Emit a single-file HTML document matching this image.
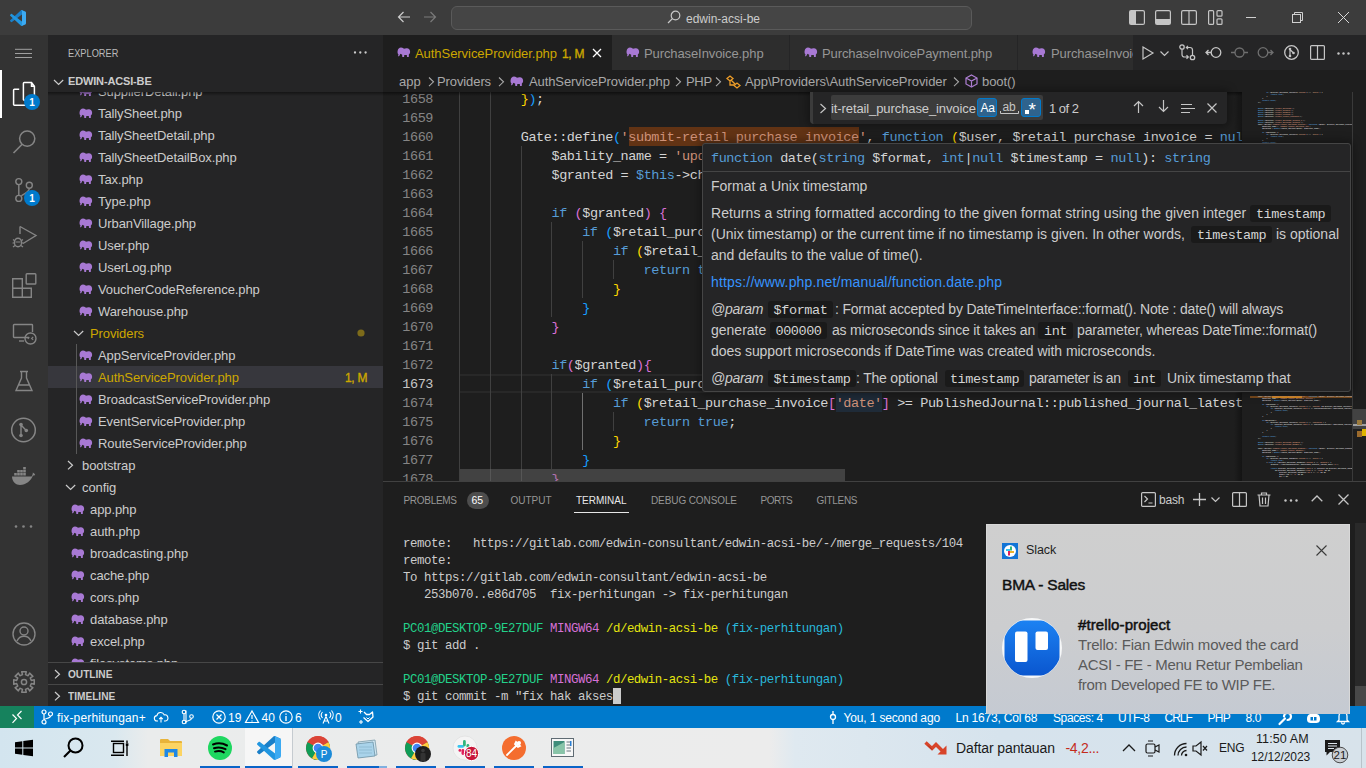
<!DOCTYPE html>
<html><head><meta charset="utf-8">
<style>
*{margin:0;padding:0;box-sizing:border-box}
html,body{width:1366px;height:768px;overflow:hidden;background:#1e1e1e;font-family:"Liberation Sans",sans-serif;position:relative}
.a{position:absolute}
.t{position:absolute;white-space:pre;line-height:1}
svg.i{position:absolute;overflow:visible}
.m{font-family:"Liberation Mono",monospace}
</style></head><body>
<div class="a" style="left:0px;top:0px;width:1366px;height:35px;background:#3c3c3c;"></div>
<div class="a" style="left:0px;top:35px;width:48px;height:671px;background:#333333;"></div>
<div class="a" style="left:48px;top:35px;width:335px;height:671px;background:#252526;"></div>
<div class="a" style="left:383px;top:35px;width:983px;height:35px;background:#252526;"></div>
<div class="a" style="left:383px;top:70px;width:983px;height:22px;background:#1e1e1e;"></div>
<div class="a" style="left:383px;top:92px;width:983px;height:390px;background:#1e1e1e;"></div>
<div class="a" style="left:383px;top:482px;width:983px;height:224px;background:#1e1e1e;"></div>
<div class="a" style="left:383px;top:481px;width:983px;height:1px;background:#414141;"></div>
<div class="a" style="left:0px;top:706px;width:1366px;height:22px;background:#007acc;"></div>
<div class="a" style="left:0px;top:728px;width:1366px;height:40px;background:linear-gradient(90deg,#d3e5ef 0px,#dae8ef 115px,#eaecec 148px,#ececec 770px,#dfe9f0 795px,#d6e3ed 1000px,#d8e3eb 1366px);"></div>
<svg class="i" style="left:10px;top:10px;" width="16" height="16" viewBox="0 0 100 100"><path d="M96.46 10.8L75.86 0.87C73.48-0.28 70.63 0.2 68.76 2.07L1.3 63.57C-0.51 65.22-0.51 68.08 1.31 69.73L6.82 74.74C8.3 76.09 10.53 76.19 12.13 74.98L93.4 13.33C96.12 11.26 100 13.2 100 16.62V16.38C100 13.98 98.63 11.8 96.46 10.8Z" fill="#1a7fc8"/><path d="M96.46 89.2L75.86 99.13C73.48 100.28 70.63 99.8 68.76 97.93L1.3 36.43C-0.51 34.78-0.51 31.92 1.31 30.27L6.82 25.26C8.3 23.91 10.53 23.81 12.13 25.02L93.4 86.67C96.12 88.74 100 86.8 100 83.38V83.62C100 86.02 98.63 88.2 96.46 89.2Z" fill="#2196e0"/><path d="M75.86 99.13C73.48 100.27 70.63 99.79 68.76 97.92C71.07 100.23 75 98.6 75 95.34V4.66C75 1.4 71.07-0.23 68.76 2.08C70.63 0.21 73.48-0.27 75.86 0.87L96.46 10.79C98.63 11.83 100 14.01 100 16.42V83.58C100 85.99 98.63 88.17 96.46 89.21Z" fill="#3caaf2"/></svg>
<svg class="i" style="left:397px;top:11px;" width="14" height="12" viewBox="0 0 14 12"><path d="M13 6H1.5M6.5 1L1.5 6l5 5" stroke="#cccccc" stroke-width="1.2" fill="none"/></svg>
<svg class="i" style="left:423px;top:11px;" width="14" height="12" viewBox="0 0 14 12"><path d="M1 6h11.5M7.5 1l5 5-5 5" stroke="#7a7a7a" stroke-width="1.2" fill="none"/></svg>
<div class="a" style="left:451px;top:6px;width:521px;height:24px;background:#454545;border:1px solid #5a5a5a;border-radius:6px"></div>
<svg class="i" style="left:667px;top:10px;" width="14" height="14" viewBox="0 0 14 14"><circle cx="8.5" cy="5.5" r="4.3" stroke="#c8c8c8" stroke-width="1.2" fill="none"/><path d="M5.4 8.6L1 13" stroke="#c8c8c8" stroke-width="1.3"/></svg>
<div class="t" style="left:686px;top:12.84px;font-size:12px;color:#cccccc;">edwin-acsi-be</div>
<svg class="i" style="left:1129px;top:10px;" width="16" height="15" viewBox="0 0 16 15"><rect x="0.6" y="0.6" width="14.8" height="13.8" rx="1.5" stroke="#c5c5c5" stroke-width="1.2" fill="none"/><rect x="1" y="1" width="6" height="13" fill="#c5c5c5"/></svg>
<svg class="i" style="left:1155px;top:10px;" width="16" height="15" viewBox="0 0 16 15"><rect x="0.6" y="0.6" width="14.8" height="13.8" rx="1.5" stroke="#c5c5c5" stroke-width="1.2" fill="none"/><rect x="1" y="9" width="14" height="5" fill="#c5c5c5"/></svg>
<svg class="i" style="left:1181px;top:10px;" width="16" height="15" viewBox="0 0 16 15"><rect x="0.6" y="0.6" width="14.8" height="13.8" rx="1.5" stroke="#c5c5c5" stroke-width="1.2" fill="none"/><path d="M8 1v13" stroke="#c5c5c5" stroke-width="1.2"/></svg>
<svg class="i" style="left:1208px;top:10px;" width="15" height="15" viewBox="0 0 15 15"><rect x="0.6" y="0.6" width="5" height="13.8" rx="1" stroke="#c5c5c5" stroke-width="1.2" fill="none"/><rect x="9" y="0.6" width="5" height="5.6" rx="1" stroke="#c5c5c5" stroke-width="1.2" fill="none"/><rect x="9" y="8.8" width="5" height="5.6" rx="1" stroke="#c5c5c5" stroke-width="1.2" fill="none"/></svg>
<div class="a" style="left:1246px;top:17px;width:10px;height:1px;background:#d0d0d0;"></div>
<svg class="i" style="left:1292px;top:12px;" width="11" height="11" viewBox="0 0 11 11"><rect x="0.5" y="2.5" width="8" height="8" stroke="#d0d0d0" fill="none"/><path d="M2.5 2.5V0.5h8v8h-2" stroke="#d0d0d0" fill="none"/></svg>
<svg class="i" style="left:1338px;top:12px;" width="11" height="11" viewBox="0 0 11 11"><path d="M0 0L11 11M11 0L0 11" stroke="#d8d8d8" stroke-width="1"/></svg>
<svg class="i" style="left:15px;top:48px;" width="18" height="11" viewBox="0 0 18 11"><path d="M0 1.3h17M0 5.5h17M0 9.5h17" stroke="#a0a0a0" stroke-width="1" fill="none"/></svg>
<div class="a" style="left:0px;top:70px;width:2px;height:48px;background:#ffffff;"></div>
<svg class="i" style="left:12px;top:81px;" width="24" height="26" viewBox="0 0 24 26"><path d="M19.5 1.6H12.2a0.8 0.8 0 0 0-0.8 0.8V18.4a0.8 0.8 0 0 0 0.8 0.8H21.6a0.8 0.8 0 0 0 0.8-0.8V5.3z M19.5 1.6V5.3h2.9" stroke="#ffffff" stroke-width="1.5" fill="none"/><path d="M7.2 8.3H2.4a0.8 0.8 0 0 0-0.8 0.8V23.4a0.8 0.8 0 0 0 0.8 0.8H15.6a0.8 0.8 0 0 0 0.8-0.8V19.5" stroke="#ffffff" stroke-width="1.5" fill="none"/></svg>
<svg class="i" style="left:24px;top:94px;" width="16" height="16" viewBox="0 0 16 16"><circle cx="8" cy="8" r="8" fill="#007acc"/><text x="8" y="12" font-size="10" font-family="Liberation Sans" font-weight="bold" fill="#fff" text-anchor="middle">1</text></svg>
<svg class="i" style="left:12px;top:129px;" width="26" height="26" viewBox="0 0 26 26"><circle cx="15.2" cy="9.6" r="7.6" stroke="#858585" stroke-width="1.5" fill="none"/><path d="M10.2 15.2L1.5 24" stroke="#858585" stroke-width="1.6" fill="none"/></svg>
<svg class="i" style="left:12px;top:176px;" width="24" height="26" viewBox="0 0 24 26"><circle cx="6.8" cy="5.6" r="3" stroke="#858585" stroke-width="1.4" fill="none"/><circle cx="6.8" cy="22.4" r="3" stroke="#858585" stroke-width="1.4" fill="none"/><circle cx="17.3" cy="9.3" r="3" stroke="#858585" stroke-width="1.4" fill="none"/><path d="M6.8 8.6V19.4M17.3 12.3c0 4-4 4.5-8 7.5" stroke="#858585" stroke-width="1.4" fill="none"/></svg>
<svg class="i" style="left:24px;top:190px;" width="16" height="16" viewBox="0 0 16 16"><circle cx="8" cy="8" r="8" fill="#007acc"/><text x="8" y="12" font-size="10" font-family="Liberation Sans" font-weight="bold" fill="#fff" text-anchor="middle">1</text></svg>
<svg class="i" style="left:12px;top:225px;" width="26" height="24" viewBox="0 0 26 24"><path d="M8 1.5L24 10.5L11 18.5" stroke="#858585" stroke-width="1.4" fill="none"/><path d="M8 1.5V9" stroke="#858585" stroke-width="1.4" fill="none"/><ellipse cx="6" cy="17.5" rx="3.6" ry="4.2" stroke="#858585" stroke-width="1.4" fill="none"/><path d="M1 14.5l2 1.5M11 14.5l-2 1.5M0.5 18h2M9.5 18h2M1 22l2-1.5M11 22l-2-1.5M3.5 17h5" stroke="#858585" stroke-width="1.2" fill="none"/></svg>
<svg class="i" style="left:12px;top:273px;" width="25" height="25" viewBox="0 0 25 25"><path d="M0.7 5.7H10.3V15.3H0.7Z M0.7 15.3H10.3V24.3H0.7Z M10.3 15.3H19.3V24.3H10.3Z" stroke="#858585" stroke-width="1.4" fill="none"/><rect x="14.2" y="0.7" width="9.6" height="10.3" rx="0.8" stroke="#858585" stroke-width="1.4" fill="none"/></svg>
<svg class="i" style="left:12px;top:323px;" width="26" height="24" viewBox="0 0 26 24"><path d="M17 14.5H2.2a0.7 0.7 0 0 1-0.7-0.7V2.2a0.7 0.7 0 0 1 0.7-0.7H19.8a0.7 0.7 0 0 1 0.7 0.7V9" stroke="#858585" stroke-width="1.4" fill="none"/><path d="M7 18h5" stroke="#858585" stroke-width="1.4" fill="none"/><circle cx="18.5" cy="15.5" r="5.5" stroke="#858585" stroke-width="1.4" fill="none"/><path d="M15.8 15.8l1.6-1.4M21.2 14l-1.6 1.4 1.6 1.4" stroke="#858585" stroke-width="1.1" fill="none"/></svg>
<svg class="i" style="left:14px;top:370px;" width="20" height="24" viewBox="0 0 20 24"><path d="M6 1.5h8M7.5 1.5V8L2 20.5h16L12.5 8V1.5M4 15h12" stroke="#858585" stroke-width="1.4" fill="none"/></svg>
<svg class="i" style="left:11px;top:418px;" width="26" height="26" viewBox="0 0 26 26"><circle cx="12.5" cy="12" r="11.8" stroke="#858585" stroke-width="1.5" fill="none"/><circle cx="10" cy="6.6" r="1.8" fill="#858585"/><circle cx="10" cy="17.5" r="1.8" fill="#858585"/><circle cx="15.3" cy="12.5" r="1.8" fill="#858585"/><path d="M10 6.6V17.5M10 7l5.3 5.5" stroke="#858585" stroke-width="1.4" fill="none"/></svg>
<svg class="i" style="left:11px;top:469px;" width="25" height="17" viewBox="0 0 25 17"><path d="M1 7.5h19.5c1-1.5 1.5-3 1.3-4 1.2 0.5 2 1.5 2.4 2.5-0.8 0.4-1.6 0.6-2.3 0.6C20 12 15 16 9 16c-4 0-8-3.5-8-8.5z" fill="#858585"/><path d="M3.2 4h2.6v2.6H3.2zM6.2 4h2.6v2.6H6.2zM9.2 4h2.6v2.6H9.2zM12.2 4h2.6v2.6h-2.6zM6.2 1h2.6v2.6H6.2zM9.2 1h2.6v2.6H9.2zM12.2 1h2.6v2.6h-2.6zM12.2 -2h2.6v2.6h-2.6z" fill="#858585"/></svg>
<svg class="i" style="left:14px;top:525px;" width="20" height="3" viewBox="0 0 20 3"><circle cx="2" cy="1.5" r="1.3" fill="#858585"/><circle cx="9.5" cy="1.5" r="1.3" fill="#858585"/><circle cx="17" cy="1.5" r="1.3" fill="#858585"/></svg>
<svg class="i" style="left:12px;top:622px;" width="24" height="24" viewBox="0 0 24 24"><circle cx="12" cy="12" r="11" stroke="#858585" stroke-width="1.4" fill="none"/><circle cx="12" cy="9" r="4" stroke="#858585" stroke-width="1.4" fill="none"/><path d="M5 19c1.5-3.5 4-4.8 7-4.8s5.5 1.3 7 4.8" stroke="#858585" stroke-width="1.4" fill="none"/></svg>
<svg class="i" style="left:12px;top:670px;" width="24" height="24" viewBox="0 0 24 24"><polygon points="19.35,10.51 22.25,9.71 22.25,14.29 19.35,13.49 18.25,16.14 20.87,17.63 17.63,20.87 16.14,18.25 13.49,19.35 14.29,22.25 9.71,22.25 10.51,19.35 7.86,18.25 6.37,20.87 3.13,17.63 5.75,16.14 4.65,13.49 1.75,14.29 1.75,9.71 4.65,10.51 5.75,7.86 3.13,6.37 6.37,3.13 7.86,5.75 10.51,4.65 9.71,1.75 14.29,1.75 13.49,4.65 16.14,5.75 17.63,3.13 20.87,6.37 18.25,7.86" stroke="#858585" stroke-width="1.5" fill="none" stroke-linejoin="round"/><circle cx="12" cy="12" r="2.6" stroke="#858585" stroke-width="1.5" fill="none"/></svg>
<div class="a" style="left:48px;top:92px;width:335px;height:570px;overflow:hidden">
<svg class="i" style="left:31px;top:-6px;" width="14" height="10" viewBox="0 0 14 10"><path d="M4 0.5C5.8 0.5 6.6 1.3 7 1.8 8 1.2 9.5 1 11 1.4 12.6 1.9 13.2 3.4 13.1 5 13 6.4 12.6 7 11.9 7.3L11.8 10H10L9.8 8.1H7.3L7.1 10H5.3L5.1 7.6C4.3 7.4 3.7 7.1 3.3 6.7L2.7 8.3C2.4 9.1 1.6 9.6 0.9 9.1L1.6 7.8C0.6 6.8 0.4 5.4 0.6 4 0.9 1.8 2.2 0.5 4 0.5Z" fill="#a879d4"/></svg>
<div class="t" style="left:50px;top:-7.20px;font-size:13px;color:#cccccc;letter-spacing:-0.1px">SupplierDetail.php</div>
<svg class="i" style="left:31px;top:16px;" width="14" height="10" viewBox="0 0 14 10"><path d="M4 0.5C5.8 0.5 6.6 1.3 7 1.8 8 1.2 9.5 1 11 1.4 12.6 1.9 13.2 3.4 13.1 5 13 6.4 12.6 7 11.9 7.3L11.8 10H10L9.8 8.1H7.3L7.1 10H5.3L5.1 7.6C4.3 7.4 3.7 7.1 3.3 6.7L2.7 8.3C2.4 9.1 1.6 9.6 0.9 9.1L1.6 7.8C0.6 6.8 0.4 5.4 0.6 4 0.9 1.8 2.2 0.5 4 0.5Z" fill="#a879d4"/></svg>
<div class="t" style="left:50px;top:14.80px;font-size:13px;color:#cccccc;letter-spacing:-0.1px">TallySheet.php</div>
<svg class="i" style="left:31px;top:38px;" width="14" height="10" viewBox="0 0 14 10"><path d="M4 0.5C5.8 0.5 6.6 1.3 7 1.8 8 1.2 9.5 1 11 1.4 12.6 1.9 13.2 3.4 13.1 5 13 6.4 12.6 7 11.9 7.3L11.8 10H10L9.8 8.1H7.3L7.1 10H5.3L5.1 7.6C4.3 7.4 3.7 7.1 3.3 6.7L2.7 8.3C2.4 9.1 1.6 9.6 0.9 9.1L1.6 7.8C0.6 6.8 0.4 5.4 0.6 4 0.9 1.8 2.2 0.5 4 0.5Z" fill="#a879d4"/></svg>
<div class="t" style="left:50px;top:36.80px;font-size:13px;color:#cccccc;letter-spacing:-0.1px">TallySheetDetail.php</div>
<svg class="i" style="left:31px;top:60px;" width="14" height="10" viewBox="0 0 14 10"><path d="M4 0.5C5.8 0.5 6.6 1.3 7 1.8 8 1.2 9.5 1 11 1.4 12.6 1.9 13.2 3.4 13.1 5 13 6.4 12.6 7 11.9 7.3L11.8 10H10L9.8 8.1H7.3L7.1 10H5.3L5.1 7.6C4.3 7.4 3.7 7.1 3.3 6.7L2.7 8.3C2.4 9.1 1.6 9.6 0.9 9.1L1.6 7.8C0.6 6.8 0.4 5.4 0.6 4 0.9 1.8 2.2 0.5 4 0.5Z" fill="#a879d4"/></svg>
<div class="t" style="left:50px;top:58.80px;font-size:13px;color:#cccccc;letter-spacing:-0.1px">TallySheetDetailBox.php</div>
<svg class="i" style="left:31px;top:82px;" width="14" height="10" viewBox="0 0 14 10"><path d="M4 0.5C5.8 0.5 6.6 1.3 7 1.8 8 1.2 9.5 1 11 1.4 12.6 1.9 13.2 3.4 13.1 5 13 6.4 12.6 7 11.9 7.3L11.8 10H10L9.8 8.1H7.3L7.1 10H5.3L5.1 7.6C4.3 7.4 3.7 7.1 3.3 6.7L2.7 8.3C2.4 9.1 1.6 9.6 0.9 9.1L1.6 7.8C0.6 6.8 0.4 5.4 0.6 4 0.9 1.8 2.2 0.5 4 0.5Z" fill="#a879d4"/></svg>
<div class="t" style="left:50px;top:80.80px;font-size:13px;color:#cccccc;letter-spacing:-0.1px">Tax.php</div>
<svg class="i" style="left:31px;top:104px;" width="14" height="10" viewBox="0 0 14 10"><path d="M4 0.5C5.8 0.5 6.6 1.3 7 1.8 8 1.2 9.5 1 11 1.4 12.6 1.9 13.2 3.4 13.1 5 13 6.4 12.6 7 11.9 7.3L11.8 10H10L9.8 8.1H7.3L7.1 10H5.3L5.1 7.6C4.3 7.4 3.7 7.1 3.3 6.7L2.7 8.3C2.4 9.1 1.6 9.6 0.9 9.1L1.6 7.8C0.6 6.8 0.4 5.4 0.6 4 0.9 1.8 2.2 0.5 4 0.5Z" fill="#a879d4"/></svg>
<div class="t" style="left:50px;top:102.80px;font-size:13px;color:#cccccc;letter-spacing:-0.1px">Type.php</div>
<svg class="i" style="left:31px;top:126px;" width="14" height="10" viewBox="0 0 14 10"><path d="M4 0.5C5.8 0.5 6.6 1.3 7 1.8 8 1.2 9.5 1 11 1.4 12.6 1.9 13.2 3.4 13.1 5 13 6.4 12.6 7 11.9 7.3L11.8 10H10L9.8 8.1H7.3L7.1 10H5.3L5.1 7.6C4.3 7.4 3.7 7.1 3.3 6.7L2.7 8.3C2.4 9.1 1.6 9.6 0.9 9.1L1.6 7.8C0.6 6.8 0.4 5.4 0.6 4 0.9 1.8 2.2 0.5 4 0.5Z" fill="#a879d4"/></svg>
<div class="t" style="left:50px;top:124.80px;font-size:13px;color:#cccccc;letter-spacing:-0.1px">UrbanVillage.php</div>
<svg class="i" style="left:31px;top:148px;" width="14" height="10" viewBox="0 0 14 10"><path d="M4 0.5C5.8 0.5 6.6 1.3 7 1.8 8 1.2 9.5 1 11 1.4 12.6 1.9 13.2 3.4 13.1 5 13 6.4 12.6 7 11.9 7.3L11.8 10H10L9.8 8.1H7.3L7.1 10H5.3L5.1 7.6C4.3 7.4 3.7 7.1 3.3 6.7L2.7 8.3C2.4 9.1 1.6 9.6 0.9 9.1L1.6 7.8C0.6 6.8 0.4 5.4 0.6 4 0.9 1.8 2.2 0.5 4 0.5Z" fill="#a879d4"/></svg>
<div class="t" style="left:50px;top:146.80px;font-size:13px;color:#cccccc;letter-spacing:-0.1px">User.php</div>
<svg class="i" style="left:31px;top:170px;" width="14" height="10" viewBox="0 0 14 10"><path d="M4 0.5C5.8 0.5 6.6 1.3 7 1.8 8 1.2 9.5 1 11 1.4 12.6 1.9 13.2 3.4 13.1 5 13 6.4 12.6 7 11.9 7.3L11.8 10H10L9.8 8.1H7.3L7.1 10H5.3L5.1 7.6C4.3 7.4 3.7 7.1 3.3 6.7L2.7 8.3C2.4 9.1 1.6 9.6 0.9 9.1L1.6 7.8C0.6 6.8 0.4 5.4 0.6 4 0.9 1.8 2.2 0.5 4 0.5Z" fill="#a879d4"/></svg>
<div class="t" style="left:50px;top:168.80px;font-size:13px;color:#cccccc;letter-spacing:-0.1px">UserLog.php</div>
<svg class="i" style="left:31px;top:192px;" width="14" height="10" viewBox="0 0 14 10"><path d="M4 0.5C5.8 0.5 6.6 1.3 7 1.8 8 1.2 9.5 1 11 1.4 12.6 1.9 13.2 3.4 13.1 5 13 6.4 12.6 7 11.9 7.3L11.8 10H10L9.8 8.1H7.3L7.1 10H5.3L5.1 7.6C4.3 7.4 3.7 7.1 3.3 6.7L2.7 8.3C2.4 9.1 1.6 9.6 0.9 9.1L1.6 7.8C0.6 6.8 0.4 5.4 0.6 4 0.9 1.8 2.2 0.5 4 0.5Z" fill="#a879d4"/></svg>
<div class="t" style="left:50px;top:190.80px;font-size:13px;color:#cccccc;letter-spacing:-0.1px">VoucherCodeReference.php</div>
<svg class="i" style="left:31px;top:214px;" width="14" height="10" viewBox="0 0 14 10"><path d="M4 0.5C5.8 0.5 6.6 1.3 7 1.8 8 1.2 9.5 1 11 1.4 12.6 1.9 13.2 3.4 13.1 5 13 6.4 12.6 7 11.9 7.3L11.8 10H10L9.8 8.1H7.3L7.1 10H5.3L5.1 7.6C4.3 7.4 3.7 7.1 3.3 6.7L2.7 8.3C2.4 9.1 1.6 9.6 0.9 9.1L1.6 7.8C0.6 6.8 0.4 5.4 0.6 4 0.9 1.8 2.2 0.5 4 0.5Z" fill="#a879d4"/></svg>
<div class="t" style="left:50px;top:212.80px;font-size:13px;color:#cccccc;letter-spacing:-0.1px">Warehouse.php</div>
<svg class="i" style="left:25px;top:237px;" width="11" height="8" viewBox="0 0 11 8"><path d="M1 2l4.6 4.5L10.2 2" stroke="#cccccc" stroke-width="1.2" fill="none"/></svg>
<div class="t" style="left:42px;top:234.80px;font-size:13px;color:#cca700;letter-spacing:-0.1px">Providers</div>
<svg class="i" style="left:309px;top:237px;" width="8" height="8" viewBox="0 0 8 8"><circle cx="4" cy="4" r="3.6" fill="#7d6b1a"/></svg>
<svg class="i" style="left:31px;top:258px;" width="14" height="10" viewBox="0 0 14 10"><path d="M4 0.5C5.8 0.5 6.6 1.3 7 1.8 8 1.2 9.5 1 11 1.4 12.6 1.9 13.2 3.4 13.1 5 13 6.4 12.6 7 11.9 7.3L11.8 10H10L9.8 8.1H7.3L7.1 10H5.3L5.1 7.6C4.3 7.4 3.7 7.1 3.3 6.7L2.7 8.3C2.4 9.1 1.6 9.6 0.9 9.1L1.6 7.8C0.6 6.8 0.4 5.4 0.6 4 0.9 1.8 2.2 0.5 4 0.5Z" fill="#a879d4"/></svg>
<div class="t" style="left:50px;top:256.80px;font-size:13px;color:#cccccc;letter-spacing:-0.1px">AppServiceProvider.php</div>
<div class="a" style="left:0px;top:274px;width:335px;height:22px;background:#37373d;"></div>
<div class="t" style="left:297px;top:279.64px;font-size:12px;color:#cca700;-webkit-text-stroke:0.35px #cca700;letter-spacing:-0.3px">1, M</div>
<svg class="i" style="left:31px;top:280px;" width="14" height="10" viewBox="0 0 14 10"><path d="M4 0.5C5.8 0.5 6.6 1.3 7 1.8 8 1.2 9.5 1 11 1.4 12.6 1.9 13.2 3.4 13.1 5 13 6.4 12.6 7 11.9 7.3L11.8 10H10L9.8 8.1H7.3L7.1 10H5.3L5.1 7.6C4.3 7.4 3.7 7.1 3.3 6.7L2.7 8.3C2.4 9.1 1.6 9.6 0.9 9.1L1.6 7.8C0.6 6.8 0.4 5.4 0.6 4 0.9 1.8 2.2 0.5 4 0.5Z" fill="#a879d4"/></svg>
<div class="t" style="left:50px;top:278.80px;font-size:13px;color:#cca700;letter-spacing:-0.1px">AuthServiceProvider.php</div>
<svg class="i" style="left:31px;top:302px;" width="14" height="10" viewBox="0 0 14 10"><path d="M4 0.5C5.8 0.5 6.6 1.3 7 1.8 8 1.2 9.5 1 11 1.4 12.6 1.9 13.2 3.4 13.1 5 13 6.4 12.6 7 11.9 7.3L11.8 10H10L9.8 8.1H7.3L7.1 10H5.3L5.1 7.6C4.3 7.4 3.7 7.1 3.3 6.7L2.7 8.3C2.4 9.1 1.6 9.6 0.9 9.1L1.6 7.8C0.6 6.8 0.4 5.4 0.6 4 0.9 1.8 2.2 0.5 4 0.5Z" fill="#a879d4"/></svg>
<div class="t" style="left:50px;top:300.80px;font-size:13px;color:#cccccc;letter-spacing:-0.1px">BroadcastServiceProvider.php</div>
<svg class="i" style="left:31px;top:324px;" width="14" height="10" viewBox="0 0 14 10"><path d="M4 0.5C5.8 0.5 6.6 1.3 7 1.8 8 1.2 9.5 1 11 1.4 12.6 1.9 13.2 3.4 13.1 5 13 6.4 12.6 7 11.9 7.3L11.8 10H10L9.8 8.1H7.3L7.1 10H5.3L5.1 7.6C4.3 7.4 3.7 7.1 3.3 6.7L2.7 8.3C2.4 9.1 1.6 9.6 0.9 9.1L1.6 7.8C0.6 6.8 0.4 5.4 0.6 4 0.9 1.8 2.2 0.5 4 0.5Z" fill="#a879d4"/></svg>
<div class="t" style="left:50px;top:322.80px;font-size:13px;color:#cccccc;letter-spacing:-0.1px">EventServiceProvider.php</div>
<svg class="i" style="left:31px;top:346px;" width="14" height="10" viewBox="0 0 14 10"><path d="M4 0.5C5.8 0.5 6.6 1.3 7 1.8 8 1.2 9.5 1 11 1.4 12.6 1.9 13.2 3.4 13.1 5 13 6.4 12.6 7 11.9 7.3L11.8 10H10L9.8 8.1H7.3L7.1 10H5.3L5.1 7.6C4.3 7.4 3.7 7.1 3.3 6.7L2.7 8.3C2.4 9.1 1.6 9.6 0.9 9.1L1.6 7.8C0.6 6.8 0.4 5.4 0.6 4 0.9 1.8 2.2 0.5 4 0.5Z" fill="#a879d4"/></svg>
<div class="t" style="left:50px;top:344.80px;font-size:13px;color:#cccccc;letter-spacing:-0.1px">RouteServiceProvider.php</div>
<svg class="i" style="left:18px;top:368px;" width="8" height="10" viewBox="0 0 8 10"><path d="M2 1l4.5 4.2L2 9.4" stroke="#cccccc" stroke-width="1.2" fill="none"/></svg>
<div class="t" style="left:34px;top:366.80px;font-size:13px;color:#cccccc;letter-spacing:-0.1px">bootstrap</div>
<svg class="i" style="left:17px;top:391px;" width="11" height="8" viewBox="0 0 11 8"><path d="M1 2l4.6 4.5L10.2 2" stroke="#cccccc" stroke-width="1.2" fill="none"/></svg>
<div class="t" style="left:34px;top:388.80px;font-size:13px;color:#cccccc;letter-spacing:-0.1px">config</div>
<svg class="i" style="left:23px;top:412px;" width="14" height="10" viewBox="0 0 14 10"><path d="M4 0.5C5.8 0.5 6.6 1.3 7 1.8 8 1.2 9.5 1 11 1.4 12.6 1.9 13.2 3.4 13.1 5 13 6.4 12.6 7 11.9 7.3L11.8 10H10L9.8 8.1H7.3L7.1 10H5.3L5.1 7.6C4.3 7.4 3.7 7.1 3.3 6.7L2.7 8.3C2.4 9.1 1.6 9.6 0.9 9.1L1.6 7.8C0.6 6.8 0.4 5.4 0.6 4 0.9 1.8 2.2 0.5 4 0.5Z" fill="#a879d4"/></svg>
<div class="t" style="left:42px;top:410.80px;font-size:13px;color:#cccccc;letter-spacing:-0.1px">app.php</div>
<svg class="i" style="left:23px;top:434px;" width="14" height="10" viewBox="0 0 14 10"><path d="M4 0.5C5.8 0.5 6.6 1.3 7 1.8 8 1.2 9.5 1 11 1.4 12.6 1.9 13.2 3.4 13.1 5 13 6.4 12.6 7 11.9 7.3L11.8 10H10L9.8 8.1H7.3L7.1 10H5.3L5.1 7.6C4.3 7.4 3.7 7.1 3.3 6.7L2.7 8.3C2.4 9.1 1.6 9.6 0.9 9.1L1.6 7.8C0.6 6.8 0.4 5.4 0.6 4 0.9 1.8 2.2 0.5 4 0.5Z" fill="#a879d4"/></svg>
<div class="t" style="left:42px;top:432.80px;font-size:13px;color:#cccccc;letter-spacing:-0.1px">auth.php</div>
<svg class="i" style="left:23px;top:456px;" width="14" height="10" viewBox="0 0 14 10"><path d="M4 0.5C5.8 0.5 6.6 1.3 7 1.8 8 1.2 9.5 1 11 1.4 12.6 1.9 13.2 3.4 13.1 5 13 6.4 12.6 7 11.9 7.3L11.8 10H10L9.8 8.1H7.3L7.1 10H5.3L5.1 7.6C4.3 7.4 3.7 7.1 3.3 6.7L2.7 8.3C2.4 9.1 1.6 9.6 0.9 9.1L1.6 7.8C0.6 6.8 0.4 5.4 0.6 4 0.9 1.8 2.2 0.5 4 0.5Z" fill="#a879d4"/></svg>
<div class="t" style="left:42px;top:454.80px;font-size:13px;color:#cccccc;letter-spacing:-0.1px">broadcasting.php</div>
<svg class="i" style="left:23px;top:478px;" width="14" height="10" viewBox="0 0 14 10"><path d="M4 0.5C5.8 0.5 6.6 1.3 7 1.8 8 1.2 9.5 1 11 1.4 12.6 1.9 13.2 3.4 13.1 5 13 6.4 12.6 7 11.9 7.3L11.8 10H10L9.8 8.1H7.3L7.1 10H5.3L5.1 7.6C4.3 7.4 3.7 7.1 3.3 6.7L2.7 8.3C2.4 9.1 1.6 9.6 0.9 9.1L1.6 7.8C0.6 6.8 0.4 5.4 0.6 4 0.9 1.8 2.2 0.5 4 0.5Z" fill="#a879d4"/></svg>
<div class="t" style="left:42px;top:476.80px;font-size:13px;color:#cccccc;letter-spacing:-0.1px">cache.php</div>
<svg class="i" style="left:23px;top:500px;" width="14" height="10" viewBox="0 0 14 10"><path d="M4 0.5C5.8 0.5 6.6 1.3 7 1.8 8 1.2 9.5 1 11 1.4 12.6 1.9 13.2 3.4 13.1 5 13 6.4 12.6 7 11.9 7.3L11.8 10H10L9.8 8.1H7.3L7.1 10H5.3L5.1 7.6C4.3 7.4 3.7 7.1 3.3 6.7L2.7 8.3C2.4 9.1 1.6 9.6 0.9 9.1L1.6 7.8C0.6 6.8 0.4 5.4 0.6 4 0.9 1.8 2.2 0.5 4 0.5Z" fill="#a879d4"/></svg>
<div class="t" style="left:42px;top:498.80px;font-size:13px;color:#cccccc;letter-spacing:-0.1px">cors.php</div>
<svg class="i" style="left:23px;top:522px;" width="14" height="10" viewBox="0 0 14 10"><path d="M4 0.5C5.8 0.5 6.6 1.3 7 1.8 8 1.2 9.5 1 11 1.4 12.6 1.9 13.2 3.4 13.1 5 13 6.4 12.6 7 11.9 7.3L11.8 10H10L9.8 8.1H7.3L7.1 10H5.3L5.1 7.6C4.3 7.4 3.7 7.1 3.3 6.7L2.7 8.3C2.4 9.1 1.6 9.6 0.9 9.1L1.6 7.8C0.6 6.8 0.4 5.4 0.6 4 0.9 1.8 2.2 0.5 4 0.5Z" fill="#a879d4"/></svg>
<div class="t" style="left:42px;top:520.80px;font-size:13px;color:#cccccc;letter-spacing:-0.1px">database.php</div>
<svg class="i" style="left:23px;top:544px;" width="14" height="10" viewBox="0 0 14 10"><path d="M4 0.5C5.8 0.5 6.6 1.3 7 1.8 8 1.2 9.5 1 11 1.4 12.6 1.9 13.2 3.4 13.1 5 13 6.4 12.6 7 11.9 7.3L11.8 10H10L9.8 8.1H7.3L7.1 10H5.3L5.1 7.6C4.3 7.4 3.7 7.1 3.3 6.7L2.7 8.3C2.4 9.1 1.6 9.6 0.9 9.1L1.6 7.8C0.6 6.8 0.4 5.4 0.6 4 0.9 1.8 2.2 0.5 4 0.5Z" fill="#a879d4"/></svg>
<div class="t" style="left:42px;top:542.80px;font-size:13px;color:#cccccc;letter-spacing:-0.1px">excel.php</div>
<svg class="i" style="left:23px;top:566px;" width="14" height="10" viewBox="0 0 14 10"><path d="M4 0.5C5.8 0.5 6.6 1.3 7 1.8 8 1.2 9.5 1 11 1.4 12.6 1.9 13.2 3.4 13.1 5 13 6.4 12.6 7 11.9 7.3L11.8 10H10L9.8 8.1H7.3L7.1 10H5.3L5.1 7.6C4.3 7.4 3.7 7.1 3.3 6.7L2.7 8.3C2.4 9.1 1.6 9.6 0.9 9.1L1.6 7.8C0.6 6.8 0.4 5.4 0.6 4 0.9 1.8 2.2 0.5 4 0.5Z" fill="#a879d4"/></svg>
<div class="t" style="left:42px;top:564.80px;font-size:13px;color:#cccccc;letter-spacing:-0.1px">filesystems.php</div>
<div class="a" style="left:28px;top:252px;width:1px;height:110px;background:#585858;"></div>
</div>
<div class="t" style="left:68px;top:47.69px;font-size:11px;color:#bbbbbb;transform:scaleX(0.84);transform-origin:0 0">EXPLORER</div>
<svg class="i" style="left:353px;top:51px;" width="15" height="3" viewBox="0 0 15 3"><circle cx="2" cy="1.5" r="1.15" fill="#cccccc"/><circle cx="7.3" cy="1.5" r="1.15" fill="#cccccc"/><circle cx="12.6" cy="1.5" r="1.15" fill="#cccccc"/></svg>
<svg class="i" style="left:53px;top:78px;" width="11" height="8" viewBox="0 0 11 8"><path d="M1 2l4.6 4.5L10.2 2" stroke="#cccccc" stroke-width="1.2" fill="none"/></svg>
<div class="t" style="left:68px;top:75.69px;font-size:11px;color:#cccccc;font-weight:bold;letter-spacing:-0.15px">EDWIN-ACSI-BE</div>
<div class="a" style="left:48px;top:92px;width:335px;height:4px;background:linear-gradient(rgba(0,0,0,0.45),rgba(0,0,0,0));"></div>
<div class="a" style="left:48px;top:662px;width:335px;height:1px;background:#474747;"></div>
<svg class="i" style="left:53px;top:669px;" width="8" height="10" viewBox="0 0 8 10"><path d="M2 1l4.5 4.2L2 9.4" stroke="#cccccc" stroke-width="1.2" fill="none"/></svg>
<div class="t" style="left:68px;top:668.69px;font-size:11px;color:#cccccc;font-weight:bold;transform:scaleX(0.92);transform-origin:0 0">OUTLINE</div>
<div class="a" style="left:48px;top:684px;width:335px;height:1px;background:#474747;"></div>
<svg class="i" style="left:53px;top:691px;" width="8" height="10" viewBox="0 0 8 10"><path d="M2 1l4.5 4.2L2 9.4" stroke="#cccccc" stroke-width="1.2" fill="none"/></svg>
<div class="t" style="left:68px;top:690.69px;font-size:11px;color:#cccccc;font-weight:bold;transform:scaleX(0.92);transform-origin:0 0">TIMELINE</div>
<div class="a" style="left:383px;top:35px;width:229px;height:35px;background:#1e1e1e;"></div>
<div class="a" style="left:612px;top:35px;width:178px;height:35px;background:#2d2d2d;border-right:1px solid #252526"></div>
<div class="a" style="left:790px;top:35px;width:228px;height:35px;background:#2d2d2d;border-right:1px solid #252526"></div>
<div class="a" style="left:1018px;top:35px;width:115px;height:35px;background:#2d2d2d;"></div>
<svg class="i" style="left:397px;top:47px;" width="14" height="10" viewBox="0 0 14 10"><path d="M4 0.5C5.8 0.5 6.6 1.3 7 1.8 8 1.2 9.5 1 11 1.4 12.6 1.9 13.2 3.4 13.1 5 13 6.4 12.6 7 11.9 7.3L11.8 10H10L9.8 8.1H7.3L7.1 10H5.3L5.1 7.6C4.3 7.4 3.7 7.1 3.3 6.7L2.7 8.3C2.4 9.1 1.6 9.6 0.9 9.1L1.6 7.8C0.6 6.8 0.4 5.4 0.6 4 0.9 1.8 2.2 0.5 4 0.5Z" fill="#a879d4"/></svg>
<div class="t" style="left:415px;top:47.00px;font-size:13px;color:#cca700;letter-spacing:-0.05px">AuthServiceProvider.php</div>
<div class="t" style="left:562px;top:47.84px;font-size:12px;color:#cca700;-webkit-text-stroke:0.35px #cca700;letter-spacing:-0.3px">1, M</div>
<svg class="i" style="left:592px;top:48px;" width="10" height="10" viewBox="0 0 10 10"><path d="M1 1L9 9M9 1L1 9" stroke="#ffffff" stroke-width="1.3"/></svg>
<svg class="i" style="left:626px;top:47px;" width="14" height="10" viewBox="0 0 14 10"><path d="M4 0.5C5.8 0.5 6.6 1.3 7 1.8 8 1.2 9.5 1 11 1.4 12.6 1.9 13.2 3.4 13.1 5 13 6.4 12.6 7 11.9 7.3L11.8 10H10L9.8 8.1H7.3L7.1 10H5.3L5.1 7.6C4.3 7.4 3.7 7.1 3.3 6.7L2.7 8.3C2.4 9.1 1.6 9.6 0.9 9.1L1.6 7.8C0.6 6.8 0.4 5.4 0.6 4 0.9 1.8 2.2 0.5 4 0.5Z" fill="#a879d4"/></svg>
<div class="t" style="left:644px;top:47.00px;font-size:13px;color:#969696;letter-spacing:-0.1px">PurchaseInvoice.php</div>
<svg class="i" style="left:804px;top:47px;" width="14" height="10" viewBox="0 0 14 10"><path d="M4 0.5C5.8 0.5 6.6 1.3 7 1.8 8 1.2 9.5 1 11 1.4 12.6 1.9 13.2 3.4 13.1 5 13 6.4 12.6 7 11.9 7.3L11.8 10H10L9.8 8.1H7.3L7.1 10H5.3L5.1 7.6C4.3 7.4 3.7 7.1 3.3 6.7L2.7 8.3C2.4 9.1 1.6 9.6 0.9 9.1L1.6 7.8C0.6 6.8 0.4 5.4 0.6 4 0.9 1.8 2.2 0.5 4 0.5Z" fill="#a879d4"/></svg>
<div class="t" style="left:822px;top:47.00px;font-size:13px;color:#969696;letter-spacing:-0.1px">PurchaseInvoicePayment.php</div>
<div class="a" style="left:1018px;top:35px;width:115px;height:35px;overflow:hidden">
<svg class="i" style="left:14px;top:12px;" width="14" height="10" viewBox="0 0 14 10"><path d="M4 0.5C5.8 0.5 6.6 1.3 7 1.8 8 1.2 9.5 1 11 1.4 12.6 1.9 13.2 3.4 13.1 5 13 6.4 12.6 7 11.9 7.3L11.8 10H10L9.8 8.1H7.3L7.1 10H5.3L5.1 7.6C4.3 7.4 3.7 7.1 3.3 6.7L2.7 8.3C2.4 9.1 1.6 9.6 0.9 9.1L1.6 7.8C0.6 6.8 0.4 5.4 0.6 4 0.9 1.8 2.2 0.5 4 0.5Z" fill="#a879d4"/></svg>
<div class="t" style="left:33px;top:12.00px;font-size:13px;color:#969696;letter-spacing:-0.1px">PurchaseInvoice.php</div>
</div>
<svg class="i" style="left:1142px;top:46px;" width="12" height="14" viewBox="0 0 12 14"><path d="M1 1L11 7L1 13Z" stroke="#c5c5c5" stroke-width="1.2" fill="none"/></svg>
<svg class="i" style="left:1160px;top:51px;" width="9" height="5" viewBox="0 0 9 5"><path d="M0.5 0.5L4.5 4.5L8.5 0.5" stroke="#c5c5c5" stroke-width="1.2" fill="none"/></svg>
<svg class="i" style="left:1179px;top:44px;" width="17" height="17" viewBox="0 0 17 17"><circle cx="3" cy="3" r="2.2" stroke="#c5c5c5" stroke-width="1.3" fill="none"/><circle cx="13.5" cy="13.5" r="2.2" stroke="#c5c5c5" stroke-width="1.3" fill="none"/><path d="M3 5.2V10.5c0 1.5 1 2.5 2.5 2.5H9M7.5 11.3L9.3 13 7.5 14.7M13.5 11.3V6c0-1.5-1-2.5-2.5-2.5H7.5M9 1.8L7.3 3.5 9 5.2" stroke="#c5c5c5" stroke-width="1.2" fill="none"/></svg>
<svg class="i" style="left:1205px;top:46px;" width="17" height="13" viewBox="0 0 17 13"><circle cx="11" cy="6.5" r="4.8" stroke="#c5c5c5" stroke-width="1.3" fill="none"/><path d="M6 6.5H1M3.5 4L1 6.5 3.5 9" stroke="#c5c5c5" stroke-width="1.3" fill="none"/></svg>
<svg class="i" style="left:1231px;top:46px;" width="17" height="13" viewBox="0 0 17 13"><circle cx="8.5" cy="6.5" r="4.5" stroke="#6f6f6f" stroke-width="1.3" fill="none"/><path d="M0 6.5H4M13 6.5H17" stroke="#6f6f6f" stroke-width="1.3" fill="none"/></svg>
<svg class="i" style="left:1257px;top:46px;" width="17" height="13" viewBox="0 0 17 13"><circle cx="6" cy="6.5" r="4.8" stroke="#6f6f6f" stroke-width="1.3" fill="none"/><path d="M11 6.5H16M13.5 4L16 6.5 13.5 9" stroke="#6f6f6f" stroke-width="1.3" fill="none"/></svg>
<svg class="i" style="left:1284px;top:45px;" width="15" height="15" viewBox="0 0 15 15"><circle cx="7.5" cy="7.5" r="6.8" stroke="#c5c5c5" stroke-width="1.3" fill="none"/><circle cx="6" cy="4" r="1.3" fill="#c5c5c5"/><circle cx="6" cy="11" r="1.3" fill="#c5c5c5"/><circle cx="9.5" cy="8" r="1.3" fill="#c5c5c5"/><path d="M6 4V11M6 4.5L9.5 8" stroke="#c5c5c5" stroke-width="1.2" fill="none"/></svg>
<svg class="i" style="left:1310px;top:45px;" width="15" height="15" viewBox="0 0 15 15"><rect x="0.6" y="0.6" width="13.8" height="13.8" rx="1" stroke="#c5c5c5" stroke-width="1.2" fill="none"/><path d="M7.5 1V14" stroke="#c5c5c5" stroke-width="1.2" fill="none"/></svg>
<svg class="i" style="left:1337px;top:52px;" width="13" height="3" viewBox="0 0 13 3"><circle cx="1.5" cy="1.5" r="1.2" fill="#c5c5c5"/><circle cx="6.5" cy="1.5" r="1.2" fill="#c5c5c5"/><circle cx="11.5" cy="1.5" r="1.2" fill="#c5c5c5"/></svg>
<div class="t" style="left:399px;top:75.00px;font-size:13px;color:#a9a9a9;">app</div>
<svg class="i" style="left:428px;top:77px;" width="7" height="10" viewBox="0 0 7 10"><path d="M1 0.5L5.5 4.8L1 9.1" stroke="#a9a9a9" stroke-width="1.1" fill="none"/></svg>
<div class="t" style="left:437px;top:75.00px;font-size:13px;color:#a9a9a9;letter-spacing:-0.1px">Providers</div>
<svg class="i" style="left:498px;top:77px;" width="7" height="10" viewBox="0 0 7 10"><path d="M1 0.5L5.5 4.8L1 9.1" stroke="#a9a9a9" stroke-width="1.1" fill="none"/></svg>
<svg class="i" style="left:510px;top:76px;" width="14" height="10" viewBox="0 0 14 10"><path d="M4 0.5C5.8 0.5 6.6 1.3 7 1.8 8 1.2 9.5 1 11 1.4 12.6 1.9 13.2 3.4 13.1 5 13 6.4 12.6 7 11.9 7.3L11.8 10H10L9.8 8.1H7.3L7.1 10H5.3L5.1 7.6C4.3 7.4 3.7 7.1 3.3 6.7L2.7 8.3C2.4 9.1 1.6 9.6 0.9 9.1L1.6 7.8C0.6 6.8 0.4 5.4 0.6 4 0.9 1.8 2.2 0.5 4 0.5Z" fill="#a879d4"/></svg>
<div class="t" style="left:529px;top:75.00px;font-size:13px;color:#a9a9a9;letter-spacing:-0.1px">AuthServiceProvider.php</div>
<svg class="i" style="left:675px;top:77px;" width="7" height="10" viewBox="0 0 7 10"><path d="M1 0.5L5.5 4.8L1 9.1" stroke="#a9a9a9" stroke-width="1.1" fill="none"/></svg>
<div class="t" style="left:686px;top:75.00px;font-size:13px;color:#a9a9a9;letter-spacing:-0.3px">PHP</div>
<svg class="i" style="left:715px;top:77px;" width="7" height="10" viewBox="0 0 7 10"><path d="M1 0.5L5.5 4.8L1 9.1" stroke="#a9a9a9" stroke-width="1.1" fill="none"/></svg>
<svg class="i" style="left:726px;top:75px;" width="15" height="14" viewBox="0 0 15 14"><path d="M1 3.5L4 1L7 3.5L4 6Z M8 10.5L11 8L14 10.5L11 13Z M5.5 5.5L9 9 M4 6V10H8" stroke="#ee9d28" stroke-width="1.3" fill="none"/></svg>
<div class="t" style="left:745px;top:75.00px;font-size:13px;color:#a9a9a9;letter-spacing:-0.06px">App\Providers\AuthServiceProvider</div>
<svg class="i" style="left:953px;top:77px;" width="7" height="10" viewBox="0 0 7 10"><path d="M1 0.5L5.5 4.8L1 9.1" stroke="#a9a9a9" stroke-width="1.1" fill="none"/></svg>
<svg class="i" style="left:965px;top:74px;" width="13" height="14" viewBox="0 0 13 14"><path d="M6.5 1L12 4V10L6.5 13L1 10V4Z M1 4L6.5 7L12 4 M6.5 7V13" stroke="#b180d7" stroke-width="1.2" fill="none"/></svg>
<div class="t" style="left:982px;top:75.00px;font-size:13px;color:#a9a9a9;letter-spacing:-0.1px">boot()</div>
<div class="a" style="left:383px;top:92px;width:859px;height:389px;overflow:hidden">
<div class="a" style="left:77px;top:282px;width:782px;height:19px;background:transparent;border:2px solid #282828;border-left:none"></div>
<div class="a" style="left:245.96px;top:35px;width:230.4px;height:19px;background:#623314;"></div>
<div class="a" style="left:453.32px;top:301px;width:46.08px;height:19px;background:#1f2b38;"></div>
<div class="a" style="left:76px;top:-3px;width:1px;height:19px;background:#404040;"></div>
<div class="a" style="left:107px;top:-3px;width:1px;height:19px;background:#404040;"></div>
<div class="a" style="left:76px;top:16px;width:1px;height:19px;background:#404040;"></div>
<div class="a" style="left:107px;top:16px;width:1px;height:19px;background:#404040;"></div>
<div class="a" style="left:76px;top:35px;width:1px;height:19px;background:#404040;"></div>
<div class="a" style="left:107px;top:35px;width:1px;height:19px;background:#404040;"></div>
<div class="a" style="left:76px;top:54px;width:1px;height:19px;background:#404040;"></div>
<div class="a" style="left:107px;top:54px;width:1px;height:19px;background:#404040;"></div>
<div class="a" style="left:138px;top:54px;width:1px;height:19px;background:#404040;"></div>
<div class="a" style="left:76px;top:73px;width:1px;height:19px;background:#404040;"></div>
<div class="a" style="left:107px;top:73px;width:1px;height:19px;background:#404040;"></div>
<div class="a" style="left:138px;top:73px;width:1px;height:19px;background:#404040;"></div>
<div class="a" style="left:76px;top:92px;width:1px;height:19px;background:#404040;"></div>
<div class="a" style="left:107px;top:92px;width:1px;height:19px;background:#404040;"></div>
<div class="a" style="left:138px;top:92px;width:1px;height:19px;background:#404040;"></div>
<div class="a" style="left:76px;top:111px;width:1px;height:19px;background:#404040;"></div>
<div class="a" style="left:107px;top:111px;width:1px;height:19px;background:#404040;"></div>
<div class="a" style="left:138px;top:111px;width:1px;height:19px;background:#404040;"></div>
<div class="a" style="left:76px;top:130px;width:1px;height:19px;background:#404040;"></div>
<div class="a" style="left:107px;top:130px;width:1px;height:19px;background:#404040;"></div>
<div class="a" style="left:138px;top:130px;width:1px;height:19px;background:#404040;"></div>
<div class="a" style="left:168px;top:130px;width:1px;height:19px;background:#404040;"></div>
<div class="a" style="left:76px;top:149px;width:1px;height:19px;background:#404040;"></div>
<div class="a" style="left:107px;top:149px;width:1px;height:19px;background:#404040;"></div>
<div class="a" style="left:138px;top:149px;width:1px;height:19px;background:#404040;"></div>
<div class="a" style="left:168px;top:149px;width:1px;height:19px;background:#404040;"></div>
<div class="a" style="left:199px;top:149px;width:1px;height:19px;background:#404040;"></div>
<div class="a" style="left:76px;top:168px;width:1px;height:19px;background:#404040;"></div>
<div class="a" style="left:107px;top:168px;width:1px;height:19px;background:#404040;"></div>
<div class="a" style="left:138px;top:168px;width:1px;height:19px;background:#404040;"></div>
<div class="a" style="left:168px;top:168px;width:1px;height:19px;background:#404040;"></div>
<div class="a" style="left:199px;top:168px;width:1px;height:19px;background:#404040;"></div>
<div class="a" style="left:230px;top:168px;width:1px;height:19px;background:#404040;"></div>
<div class="a" style="left:76px;top:187px;width:1px;height:19px;background:#404040;"></div>
<div class="a" style="left:107px;top:187px;width:1px;height:19px;background:#404040;"></div>
<div class="a" style="left:138px;top:187px;width:1px;height:19px;background:#404040;"></div>
<div class="a" style="left:168px;top:187px;width:1px;height:19px;background:#404040;"></div>
<div class="a" style="left:199px;top:187px;width:1px;height:19px;background:#404040;"></div>
<div class="a" style="left:76px;top:206px;width:1px;height:19px;background:#404040;"></div>
<div class="a" style="left:107px;top:206px;width:1px;height:19px;background:#404040;"></div>
<div class="a" style="left:138px;top:206px;width:1px;height:19px;background:#404040;"></div>
<div class="a" style="left:168px;top:206px;width:1px;height:19px;background:#404040;"></div>
<div class="a" style="left:76px;top:225px;width:1px;height:19px;background:#404040;"></div>
<div class="a" style="left:107px;top:225px;width:1px;height:19px;background:#404040;"></div>
<div class="a" style="left:138px;top:225px;width:1px;height:19px;background:#404040;"></div>
<div class="a" style="left:76px;top:244px;width:1px;height:19px;background:#404040;"></div>
<div class="a" style="left:107px;top:244px;width:1px;height:19px;background:#404040;"></div>
<div class="a" style="left:138px;top:244px;width:1px;height:19px;background:#404040;"></div>
<div class="a" style="left:76px;top:263px;width:1px;height:19px;background:#404040;"></div>
<div class="a" style="left:107px;top:263px;width:1px;height:19px;background:#404040;"></div>
<div class="a" style="left:138px;top:263px;width:1px;height:19px;background:#404040;"></div>
<div class="a" style="left:76px;top:282px;width:1px;height:19px;background:#404040;"></div>
<div class="a" style="left:107px;top:282px;width:1px;height:19px;background:#404040;"></div>
<div class="a" style="left:138px;top:282px;width:1px;height:19px;background:#404040;"></div>
<div class="a" style="left:168px;top:282px;width:1px;height:19px;background:#404040;"></div>
<div class="a" style="left:76px;top:301px;width:1px;height:19px;background:#404040;"></div>
<div class="a" style="left:107px;top:301px;width:1px;height:19px;background:#404040;"></div>
<div class="a" style="left:138px;top:301px;width:1px;height:19px;background:#404040;"></div>
<div class="a" style="left:168px;top:301px;width:1px;height:19px;background:#404040;"></div>
<div class="a" style="left:199px;top:301px;width:1px;height:19px;background:#707070;"></div>
<div class="a" style="left:76px;top:320px;width:1px;height:19px;background:#404040;"></div>
<div class="a" style="left:107px;top:320px;width:1px;height:19px;background:#404040;"></div>
<div class="a" style="left:138px;top:320px;width:1px;height:19px;background:#404040;"></div>
<div class="a" style="left:168px;top:320px;width:1px;height:19px;background:#404040;"></div>
<div class="a" style="left:199px;top:320px;width:1px;height:19px;background:#707070;"></div>
<div class="a" style="left:230px;top:320px;width:1px;height:19px;background:#404040;"></div>
<div class="a" style="left:76px;top:339px;width:1px;height:19px;background:#404040;"></div>
<div class="a" style="left:107px;top:339px;width:1px;height:19px;background:#404040;"></div>
<div class="a" style="left:138px;top:339px;width:1px;height:19px;background:#404040;"></div>
<div class="a" style="left:168px;top:339px;width:1px;height:19px;background:#404040;"></div>
<div class="a" style="left:199px;top:339px;width:1px;height:19px;background:#707070;"></div>
<div class="a" style="left:76px;top:358px;width:1px;height:19px;background:#404040;"></div>
<div class="a" style="left:107px;top:358px;width:1px;height:19px;background:#404040;"></div>
<div class="a" style="left:138px;top:358px;width:1px;height:19px;background:#404040;"></div>
<div class="a" style="left:168px;top:358px;width:1px;height:19px;background:#404040;"></div>
<div class="a" style="left:76px;top:377px;width:1px;height:19px;background:#404040;"></div>
<div class="a" style="left:107px;top:377px;width:1px;height:19px;background:#404040;"></div>
<div class="a" style="left:138px;top:377px;width:1px;height:19px;background:#404040;"></div>
<div class="t m" style="left:137.74px;top:-2.3px;height:19px;line-height:19px;font-size:13.5px;letter-spacing:-0.42px;color:#d4d4d4"><span style="color:#ffd700">}</span><span style="color:#179fff">)</span><span style="color:#d4d4d4">;</span></div>
<div class="t m" style="left:76.30px;top:16.7px;height:19px;line-height:19px;font-size:13.5px;letter-spacing:-0.42px;color:#d4d4d4"></div>
<div class="t m" style="left:137.74px;top:35.7px;height:19px;line-height:19px;font-size:13.5px;letter-spacing:-0.42px;color:#d4d4d4"><span style="color:#d4d4d4">Gate::define</span><span style="color:#179fff">(</span><span style="color:#ce9178">'submit-retail purchase invoice'</span><span style="color:#d4d4d4">, </span><span style="color:#569cd6">function</span><span style="color:#d4d4d4"> </span><span style="color:#ffd700">(</span><span style="color:#d4d4d4">$user, $retail purchase invoice = </span><span style="color:#569cd6">nul</span></div>
<div class="t m" style="left:168.46px;top:54.7px;height:19px;line-height:19px;font-size:13.5px;letter-spacing:-0.42px;color:#d4d4d4"><span style="color:#d4d4d4">$ability_name = </span><span style="color:#ce9178">'update-retail_purchase_invoice';</span></div>
<div class="t m" style="left:168.46px;top:73.7px;height:19px;line-height:19px;font-size:13.5px;letter-spacing:-0.42px;color:#d4d4d4"><span style="color:#d4d4d4">$granted = </span><span style="color:#569cd6">$this</span><span style="color:#d4d4d4">-&gt;check_ability($user, $ability_name);</span></div>
<div class="t m" style="left:76.30px;top:92.7px;height:19px;line-height:19px;font-size:13.5px;letter-spacing:-0.42px;color:#d4d4d4"></div>
<div class="t m" style="left:168.46px;top:111.7px;height:19px;line-height:19px;font-size:13.5px;letter-spacing:-0.42px;color:#d4d4d4"><span style="color:#569cd6">if</span><span style="color:#d4d4d4"> </span><span style="color:#da70d6">(</span><span style="color:#d4d4d4">$granted</span><span style="color:#da70d6">)</span><span style="color:#d4d4d4"> </span><span style="color:#da70d6">{</span></div>
<div class="t m" style="left:199.18px;top:130.7px;height:19px;line-height:19px;font-size:13.5px;letter-spacing:-0.42px;color:#d4d4d4"><span style="color:#569cd6">if</span><span style="color:#d4d4d4"> </span><span style="color:#179fff">(</span><span style="color:#d4d4d4">$retail_purchase_invoice</span></div>
<div class="t m" style="left:229.90px;top:149.7px;height:19px;line-height:19px;font-size:13.5px;letter-spacing:-0.42px;color:#d4d4d4"><span style="color:#569cd6">if</span><span style="color:#d4d4d4"> </span><span style="color:#ffd700">(</span><span style="color:#d4d4d4">$retail_purchase_invoice</span></div>
<div class="t m" style="left:260.62px;top:168.7px;height:19px;line-height:19px;font-size:13.5px;letter-spacing:-0.42px;color:#d4d4d4"><span style="color:#569cd6">return</span><span style="color:#d4d4d4"> </span><span style="color:#569cd6">true</span><span style="color:#d4d4d4">;</span></div>
<div class="t m" style="left:229.90px;top:187.7px;height:19px;line-height:19px;font-size:13.5px;letter-spacing:-0.42px;color:#d4d4d4"><span style="color:#ffd700">}</span></div>
<div class="t m" style="left:199.18px;top:206.7px;height:19px;line-height:19px;font-size:13.5px;letter-spacing:-0.42px;color:#d4d4d4"><span style="color:#179fff">}</span></div>
<div class="t m" style="left:168.46px;top:225.7px;height:19px;line-height:19px;font-size:13.5px;letter-spacing:-0.42px;color:#d4d4d4"><span style="color:#da70d6">}</span></div>
<div class="t m" style="left:76.30px;top:244.7px;height:19px;line-height:19px;font-size:13.5px;letter-spacing:-0.42px;color:#d4d4d4"></div>
<div class="t m" style="left:168.46px;top:263.7px;height:19px;line-height:19px;font-size:13.5px;letter-spacing:-0.42px;color:#d4d4d4"><span style="color:#569cd6">if</span><span style="color:#da70d6">(</span><span style="color:#d4d4d4">$granted</span><span style="color:#da70d6">)</span><span style="color:#da70d6">{</span></div>
<div class="t m" style="left:199.18px;top:282.7px;height:19px;line-height:19px;font-size:13.5px;letter-spacing:-0.42px;color:#d4d4d4"><span style="color:#569cd6">if</span><span style="color:#d4d4d4"> </span><span style="color:#179fff">(</span><span style="color:#d4d4d4">$retail_purchase_invoice</span></div>
<div class="t m" style="left:229.90px;top:301.7px;height:19px;line-height:19px;font-size:13.5px;letter-spacing:-0.42px;color:#d4d4d4"><span style="color:#569cd6">if</span><span style="color:#d4d4d4"> </span><span style="color:#ffd700">(</span><span style="color:#d4d4d4">$retail_purchase_invoice</span><span style="color:#da70d6">[</span><span style="color:#ce9178">'date'</span><span style="color:#da70d6">]</span><span style="color:#d4d4d4"> &gt;= PublishedJournal::published_journal_latest_date</span></div>
<div class="t m" style="left:260.62px;top:320.7px;height:19px;line-height:19px;font-size:13.5px;letter-spacing:-0.42px;color:#d4d4d4"><span style="color:#569cd6">return</span><span style="color:#d4d4d4"> </span><span style="color:#569cd6">true</span><span style="color:#d4d4d4">;</span></div>
<div class="t m" style="left:229.90px;top:339.7px;height:19px;line-height:19px;font-size:13.5px;letter-spacing:-0.42px;color:#d4d4d4"><span style="color:#ffd700">}</span></div>
<div class="t m" style="left:199.18px;top:358.7px;height:19px;line-height:19px;font-size:13.5px;letter-spacing:-0.42px;color:#d4d4d4"><span style="color:#179fff">}</span></div>
<div class="t m" style="left:168.46px;top:377.7px;height:19px;line-height:19px;font-size:13.5px;letter-spacing:-0.42px;color:#d4d4d4"><span style="color:#da70d6">}</span></div>
<div class="t m" style="left:19px;top:-2.3px;width:31px;text-align:right;height:19px;line-height:19px;font-size:13.5px;letter-spacing:-0.42px;color:#858585">1658</div>
<div class="t m" style="left:19px;top:16.7px;width:31px;text-align:right;height:19px;line-height:19px;font-size:13.5px;letter-spacing:-0.42px;color:#858585">1659</div>
<div class="t m" style="left:19px;top:35.7px;width:31px;text-align:right;height:19px;line-height:19px;font-size:13.5px;letter-spacing:-0.42px;color:#858585">1660</div>
<div class="t m" style="left:19px;top:54.7px;width:31px;text-align:right;height:19px;line-height:19px;font-size:13.5px;letter-spacing:-0.42px;color:#858585">1661</div>
<div class="t m" style="left:19px;top:73.7px;width:31px;text-align:right;height:19px;line-height:19px;font-size:13.5px;letter-spacing:-0.42px;color:#858585">1662</div>
<div class="t m" style="left:19px;top:92.7px;width:31px;text-align:right;height:19px;line-height:19px;font-size:13.5px;letter-spacing:-0.42px;color:#858585">1663</div>
<div class="t m" style="left:19px;top:111.7px;width:31px;text-align:right;height:19px;line-height:19px;font-size:13.5px;letter-spacing:-0.42px;color:#858585">1664</div>
<div class="t m" style="left:19px;top:130.7px;width:31px;text-align:right;height:19px;line-height:19px;font-size:13.5px;letter-spacing:-0.42px;color:#858585">1665</div>
<div class="t m" style="left:19px;top:149.7px;width:31px;text-align:right;height:19px;line-height:19px;font-size:13.5px;letter-spacing:-0.42px;color:#858585">1666</div>
<div class="t m" style="left:19px;top:168.7px;width:31px;text-align:right;height:19px;line-height:19px;font-size:13.5px;letter-spacing:-0.42px;color:#858585">1667</div>
<div class="t m" style="left:19px;top:187.7px;width:31px;text-align:right;height:19px;line-height:19px;font-size:13.5px;letter-spacing:-0.42px;color:#858585">1668</div>
<div class="t m" style="left:19px;top:206.7px;width:31px;text-align:right;height:19px;line-height:19px;font-size:13.5px;letter-spacing:-0.42px;color:#858585">1669</div>
<div class="t m" style="left:19px;top:225.7px;width:31px;text-align:right;height:19px;line-height:19px;font-size:13.5px;letter-spacing:-0.42px;color:#858585">1670</div>
<div class="t m" style="left:19px;top:244.7px;width:31px;text-align:right;height:19px;line-height:19px;font-size:13.5px;letter-spacing:-0.42px;color:#858585">1671</div>
<div class="t m" style="left:19px;top:263.7px;width:31px;text-align:right;height:19px;line-height:19px;font-size:13.5px;letter-spacing:-0.42px;color:#858585">1672</div>
<div class="t m" style="left:19px;top:282.7px;width:31px;text-align:right;height:19px;line-height:19px;font-size:13.5px;letter-spacing:-0.42px;color:#c6c6c6">1673</div>
<div class="t m" style="left:19px;top:301.7px;width:31px;text-align:right;height:19px;line-height:19px;font-size:13.5px;letter-spacing:-0.42px;color:#858585">1674</div>
<div class="t m" style="left:19px;top:320.7px;width:31px;text-align:right;height:19px;line-height:19px;font-size:13.5px;letter-spacing:-0.42px;color:#858585">1675</div>
<div class="t m" style="left:19px;top:339.7px;width:31px;text-align:right;height:19px;line-height:19px;font-size:13.5px;letter-spacing:-0.42px;color:#858585">1676</div>
<div class="t m" style="left:19px;top:358.7px;width:31px;text-align:right;height:19px;line-height:19px;font-size:13.5px;letter-spacing:-0.42px;color:#858585">1677</div>
<div class="t m" style="left:19px;top:377.7px;width:31px;text-align:right;height:19px;line-height:19px;font-size:13.5px;letter-spacing:-0.42px;color:#858585">1678</div>
<div class="a" style="left:0px;top:0px;width:859px;height:4px;background:linear-gradient(rgba(0,0,0,0.5),rgba(0,0,0,0));"></div>
<div class="a" style="left:77px;top:377px;width:385px;height:12px;background:rgba(121,121,121,0.4);"></div>
</div>
<div class="a" style="left:1234px;top:92px;width:8px;height:389px;background:linear-gradient(90deg,rgba(0,0,0,0),rgba(0,0,0,0.35));"></div>
<div class="a" style="left:1242px;top:92px;width:110px;height:389px;overflow:hidden">
<div class="t" style="left:24.52px;top:-0.30px;font-family:'Liberation Mono',monospace;font-size:1.8px;font-weight:bold;line-height:2px;color:#d4d4d4"><span style="color:#569cd6">if</span><span style="color:#d4d4d4"> ($retail_purchase_invoice[</span><span style="color:#ce9178">'status'</span><span style="color:#d4d4d4">] == </span><span style="color:#ce9178">'draft'</span><span style="color:#d4d4d4">) {</span></div>
<div class="t" style="left:28.80px;top:1.70px;font-family:'Liberation Mono',monospace;font-size:1.8px;font-weight:bold;line-height:2px;color:#d4d4d4"><span style="color:#569cd6">return</span><span style="color:#d4d4d4"> </span><span style="color:#569cd6">true</span><span style="color:#d4d4d4">;</span></div>
<div class="t" style="left:24.52px;top:3.70px;font-family:'Liberation Mono',monospace;font-size:1.8px;font-weight:bold;line-height:2px;color:#d4d4d4"><span style="color:#d4d4d4">}</span></div>
<div class="t" style="left:20.24px;top:5.70px;font-family:'Liberation Mono',monospace;font-size:1.8px;font-weight:bold;line-height:2px;color:#d4d4d4"><span style="color:#d4d4d4">}</span></div>
<div class="t" style="left:20.24px;top:7.70px;font-family:'Liberation Mono',monospace;font-size:1.8px;font-weight:bold;line-height:2px;color:#d4d4d4"><span style="color:#569cd6">return</span><span style="color:#d4d4d4"> </span><span style="color:#569cd6">false</span><span style="color:#d4d4d4">;</span></div>
<div class="t" style="left:15.96px;top:9.70px;font-family:'Liberation Mono',monospace;font-size:1.8px;font-weight:bold;line-height:2px;color:#d4d4d4"><span style="color:#d4d4d4">});</span></div>
<div class="t" style="left:15.96px;top:15.70px;font-family:'Liberation Mono',monospace;font-size:1.8px;font-weight:bold;line-height:2px;color:#d4d4d4"><span style="color:#569cd6">$this</span><span style="color:#d4d4d4">-&gt;ability(</span><span style="color:#ce9178">'retail_purchase'</span><span style="color:#d4d4d4">);</span></div>
<div class="t" style="left:15.96px;top:17.70px;font-family:'Liberation Mono',monospace;font-size:1.8px;font-weight:bold;line-height:2px;color:#d4d4d4"><span style="color:#569cd6">$this</span><span style="color:#d4d4d4">-&gt;ability(</span><span style="color:#ce9178">'retail_invoice'</span><span style="color:#d4d4d4">);</span></div>
<div class="t" style="left:15.96px;top:19.70px;font-family:'Liberation Mono',monospace;font-size:1.8px;font-weight:bold;line-height:2px;color:#d4d4d4"><span style="color:#569cd6">$this</span><span style="color:#d4d4d4">-&gt;ability(</span><span style="color:#ce9178">'retail_payment'</span><span style="color:#d4d4d4">);</span></div>
<div class="t" style="left:15.96px;top:21.70px;font-family:'Liberation Mono',monospace;font-size:1.8px;font-weight:bold;line-height:2px;color:#d4d4d4"><span style="color:#569cd6">$this</span><span style="color:#d4d4d4">-&gt;ability(</span><span style="color:#ce9178">'retail_receipt'</span><span style="color:#d4d4d4">);</span></div>
<div class="t" style="left:15.96px;top:23.70px;font-family:'Liberation Mono',monospace;font-size:1.8px;font-weight:bold;line-height:2px;color:#d4d4d4"><span style="color:#569cd6">$this</span><span style="color:#d4d4d4">-&gt;ability(</span><span style="color:#ce9178">'retail_return_invoices'</span><span style="color:#d4d4d4">);</span></div>
<div class="t" style="left:15.96px;top:27.70px;font-family:'Liberation Mono',monospace;font-size:1.8px;font-weight:bold;line-height:2px;color:#d4d4d4"><span style="color:#569cd6">$this</span><span style="color:#d4d4d4">-&gt;ability(</span><span style="color:#ce9178">'retail_purchase_invoice_x'</span><span style="color:#d4d4d4">);</span></div>
<div class="t" style="left:15.96px;top:29.70px;font-family:'Liberation Mono',monospace;font-size:1.8px;font-weight:bold;line-height:2px;color:#d4d4d4"><span style="color:#569cd6">$this</span><span style="color:#d4d4d4">-&gt;ability(</span><span style="color:#ce9178">'retail_purchase_invoice'</span><span style="color:#d4d4d4">);</span></div>
<div class="t" style="left:15.96px;top:31.70px;font-family:'Liberation Mono',monospace;font-size:1.8px;font-weight:bold;line-height:2px;color:#d4d4d4"><span style="color:#d4d4d4">Gate::define(</span><span style="color:#ce9178">'submit-retail_purchase_invoice'</span><span style="color:#d4d4d4">, </span><span style="color:#569cd6">function</span><span style="color:#d4d4d4"> ($user, $retail_purchase_invoice = null) {</span></div>
<div class="t" style="left:20.24px;top:33.70px;font-family:'Liberation Mono',monospace;font-size:1.8px;font-weight:bold;line-height:2px;color:#d4d4d4"><span style="color:#d4d4d4">$ability_name = </span><span style="color:#ce9178">'submit-retail_purchase_inv'</span><span style="color:#d4d4d4">;</span></div>
<div class="t" style="left:20.24px;top:35.70px;font-family:'Liberation Mono',monospace;font-size:1.8px;font-weight:bold;line-height:2px;color:#d4d4d4"><span style="color:#d4d4d4">$granted = </span><span style="color:#569cd6">$this</span><span style="color:#d4d4d4">-&gt;check_ability($user, $ability_name);</span></div>
<div class="t" style="left:20.24px;top:39.70px;font-family:'Liberation Mono',monospace;font-size:1.8px;font-weight:bold;line-height:2px;color:#d4d4d4"><span style="color:#569cd6">if</span><span style="color:#d4d4d4"> ($granted) {</span></div>
<div class="t" style="left:24.52px;top:41.70px;font-family:'Liberation Mono',monospace;font-size:1.8px;font-weight:bold;line-height:2px;color:#d4d4d4"><span style="color:#569cd6">if</span><span style="color:#d4d4d4"> ($retail_purchase_invoice[</span><span style="color:#ce9178">'status'</span><span style="color:#d4d4d4">] == </span><span style="color:#ce9178">'draft'</span><span style="color:#d4d4d4">) {</span></div>
<div class="t" style="left:28.80px;top:43.70px;font-family:'Liberation Mono',monospace;font-size:1.8px;font-weight:bold;line-height:2px;color:#d4d4d4"><span style="color:#569cd6">return</span><span style="color:#d4d4d4"> </span><span style="color:#569cd6">true</span><span style="color:#d4d4d4">;</span></div>
<div class="t" style="left:24.52px;top:45.70px;font-family:'Liberation Mono',monospace;font-size:1.8px;font-weight:bold;line-height:2px;color:#d4d4d4"><span style="color:#d4d4d4">}</span></div>
<div class="t" style="left:20.24px;top:47.70px;font-family:'Liberation Mono',monospace;font-size:1.8px;font-weight:bold;line-height:2px;color:#d4d4d4"><span style="color:#d4d4d4">}</span></div>
<div class="t" style="left:20.24px;top:49.70px;font-family:'Liberation Mono',monospace;font-size:1.8px;font-weight:bold;line-height:2px;color:#d4d4d4"><span style="color:#569cd6">return</span><span style="color:#d4d4d4"> </span><span style="color:#569cd6">false</span><span style="color:#d4d4d4">;</span></div>
<div class="a" style="left:8px;top:303.7px;width:102px;height:2px;background:#7a4a1c;"></div>
<div class="a" style="left:30px;top:303.7px;width:30px;height:2px;background:#d88a1c;"></div>
<div class="t" style="left:15.96px;top:303.70px;font-family:'Liberation Mono',monospace;font-size:1.8px;font-weight:bold;line-height:2px;color:#d4d4d4"><span style="color:#d4d4d4">Gate::define(</span><span style="color:#ce9178">'submit-retail_purchase_invoice'</span><span style="color:#d4d4d4">, </span><span style="color:#569cd6">function</span><span style="color:#d4d4d4"> ($user, $retail_purchase_invoice = null) {</span></div>
<div class="t" style="left:20.24px;top:305.70px;font-family:'Liberation Mono',monospace;font-size:1.8px;font-weight:bold;line-height:2px;color:#d4d4d4"><span style="color:#d4d4d4">$ability_name = </span><span style="color:#ce9178">'submit-retail_purchase_invoice'</span><span style="color:#d4d4d4">;</span></div>
<div class="t" style="left:20.24px;top:307.70px;font-family:'Liberation Mono',monospace;font-size:1.8px;font-weight:bold;line-height:2px;color:#d4d4d4"><span style="color:#d4d4d4">$granted = </span><span style="color:#569cd6">$this</span><span style="color:#d4d4d4">-&gt;check_ability($user, $ability_name);</span></div>
<div class="t" style="left:20.24px;top:311.70px;font-family:'Liberation Mono',monospace;font-size:1.8px;font-weight:bold;line-height:2px;color:#d4d4d4"><span style="color:#569cd6">if</span><span style="color:#d4d4d4"> ($granted) {</span></div>
<div class="t" style="left:24.52px;top:313.70px;font-family:'Liberation Mono',monospace;font-size:1.8px;font-weight:bold;line-height:2px;color:#d4d4d4"><span style="color:#569cd6">if</span><span style="color:#d4d4d4"> ($retail_purchase_invoice[</span><span style="color:#ce9178">'status'</span><span style="color:#d4d4d4">] == </span><span style="color:#ce9178">'posted'</span><span style="color:#d4d4d4"> &amp;&amp; $retail_purchase_invoice[</span><span style="color:#ce9178">'date'</span><span style="color:#d4d4d4">] &gt;= Published</span></div>
<div class="t" style="left:28.80px;top:315.70px;font-family:'Liberation Mono',monospace;font-size:1.8px;font-weight:bold;line-height:2px;color:#d4d4d4"><span style="color:#569cd6">if</span><span style="color:#d4d4d4"> ($retail_purchase_invoice[</span><span style="color:#ce9178">'date'</span><span style="color:#d4d4d4">] &gt;= PublishedJournal::published_journal_latest_date</span></div>
<div class="t" style="left:33.08px;top:317.70px;font-family:'Liberation Mono',monospace;font-size:1.8px;font-weight:bold;line-height:2px;color:#d4d4d4"><span style="color:#569cd6">return</span><span style="color:#d4d4d4"> </span><span style="color:#569cd6">true</span><span style="color:#d4d4d4">;</span></div>
<div class="t" style="left:28.80px;top:319.70px;font-family:'Liberation Mono',monospace;font-size:1.8px;font-weight:bold;line-height:2px;color:#d4d4d4"><span style="color:#d4d4d4">}</span></div>
<div class="t" style="left:24.52px;top:321.70px;font-family:'Liberation Mono',monospace;font-size:1.8px;font-weight:bold;line-height:2px;color:#d4d4d4"><span style="color:#d4d4d4">}</span></div>
<div class="t" style="left:20.24px;top:323.70px;font-family:'Liberation Mono',monospace;font-size:1.8px;font-weight:bold;line-height:2px;color:#d4d4d4"><span style="color:#d4d4d4">}</span></div>
<div class="t" style="left:20.24px;top:327.70px;font-family:'Liberation Mono',monospace;font-size:1.8px;font-weight:bold;line-height:2px;color:#d4d4d4"><span style="color:#569cd6">if</span><span style="color:#d4d4d4">($granted){</span></div>
<div class="t" style="left:24.52px;top:329.70px;font-family:'Liberation Mono',monospace;font-size:1.8px;font-weight:bold;line-height:2px;color:#d4d4d4"><span style="color:#569cd6">if</span><span style="color:#d4d4d4"> ($retail_purchase_invoice[</span><span style="color:#ce9178">'status'</span><span style="color:#d4d4d4">] == </span><span style="color:#ce9178">'unposted'</span><span style="color:#d4d4d4">) {</span></div>
<div class="t" style="left:28.80px;top:331.70px;font-family:'Liberation Mono',monospace;font-size:1.8px;font-weight:bold;line-height:2px;color:#d4d4d4"><span style="color:#569cd6">if</span><span style="color:#d4d4d4"> ($retail_purchase_invoice[</span><span style="color:#ce9178">'date'</span><span style="color:#d4d4d4">] &gt;= PublishedJournal::published_journal_latest_date</span></div>
<div class="t" style="left:33.08px;top:333.70px;font-family:'Liberation Mono',monospace;font-size:1.8px;font-weight:bold;line-height:2px;color:#d4d4d4"><span style="color:#569cd6">return</span><span style="color:#d4d4d4"> </span><span style="color:#569cd6">true</span><span style="color:#d4d4d4">;</span></div>
<div class="t" style="left:28.80px;top:335.70px;font-family:'Liberation Mono',monospace;font-size:1.8px;font-weight:bold;line-height:2px;color:#d4d4d4"><span style="color:#d4d4d4">}</span></div>
<div class="t" style="left:24.52px;top:337.70px;font-family:'Liberation Mono',monospace;font-size:1.8px;font-weight:bold;line-height:2px;color:#d4d4d4"><span style="color:#d4d4d4">}</span></div>
<div class="t" style="left:20.24px;top:339.70px;font-family:'Liberation Mono',monospace;font-size:1.8px;font-weight:bold;line-height:2px;color:#d4d4d4"><span style="color:#d4d4d4">}</span></div>
<div class="t" style="left:20.24px;top:343.70px;font-family:'Liberation Mono',monospace;font-size:1.8px;font-weight:bold;line-height:2px;color:#d4d4d4"><span style="color:#569cd6">return</span><span style="color:#d4d4d4"> </span><span style="color:#569cd6">false</span><span style="color:#d4d4d4">;</span></div>
<div class="t" style="left:15.96px;top:345.70px;font-family:'Liberation Mono',monospace;font-size:1.8px;font-weight:bold;line-height:2px;color:#d4d4d4"><span style="color:#d4d4d4">});</span></div>
<div class="t" style="left:15.96px;top:349.70px;font-family:'Liberation Mono',monospace;font-size:1.8px;font-weight:bold;line-height:2px;color:#d4d4d4"><span style="color:#569cd6">$this</span><span style="color:#d4d4d4">-&gt;ability(</span><span style="color:#ce9178">'retail_purchase_payment'</span><span style="color:#d4d4d4">);</span></div>
<div class="t" style="left:15.96px;top:351.70px;font-family:'Liberation Mono',monospace;font-size:1.8px;font-weight:bold;line-height:2px;color:#d4d4d4"><span style="color:#569cd6">$this</span><span style="color:#d4d4d4">-&gt;ability(</span><span style="color:#ce9178">'retail_purchase_paymnt'</span><span style="color:#d4d4d4">);</span></div>
<div class="t" style="left:15.96px;top:355.70px;font-family:'Liberation Mono',monospace;font-size:1.8px;font-weight:bold;line-height:2px;color:#d4d4d4"><span style="color:#d4d4d4">Gate::define(</span><span style="color:#ce9178">'submit-retail_purchase_payment'</span><span style="color:#d4d4d4">, </span><span style="color:#569cd6">function</span><span style="color:#d4d4d4"> ($user, $retail_purchase_payment = null) {</span></div>
<div class="t" style="left:20.24px;top:357.70px;font-family:'Liberation Mono',monospace;font-size:1.8px;font-weight:bold;line-height:2px;color:#d4d4d4"><span style="color:#d4d4d4">$ability_name = </span><span style="color:#ce9178">'submit-retail_payment'</span><span style="color:#d4d4d4">;</span></div>
<div class="t" style="left:20.24px;top:359.70px;font-family:'Liberation Mono',monospace;font-size:1.8px;font-weight:bold;line-height:2px;color:#d4d4d4"><span style="color:#d4d4d4">$granted = </span><span style="color:#569cd6">$this</span><span style="color:#d4d4d4">-&gt;check_ability($user, $ability_name);</span></div>
<div class="t" style="left:20.24px;top:363.70px;font-family:'Liberation Mono',monospace;font-size:1.8px;font-weight:bold;line-height:2px;color:#d4d4d4"><span style="color:#569cd6">if</span><span style="color:#d4d4d4"> ($granted) {</span></div>
<div class="t" style="left:24.52px;top:365.70px;font-family:'Liberation Mono',monospace;font-size:1.8px;font-weight:bold;line-height:2px;color:#d4d4d4"><span style="color:#569cd6">if</span><span style="color:#d4d4d4"> ($retail_purchase_payment[</span><span style="color:#ce9178">'status'</span><span style="color:#d4d4d4">] == </span><span style="color:#ce9178">'draft'</span><span style="color:#d4d4d4">) {</span></div>
<div class="t" style="left:28.80px;top:367.70px;font-family:'Liberation Mono',monospace;font-size:1.8px;font-weight:bold;line-height:2px;color:#d4d4d4"><span style="color:#569cd6">return</span><span style="color:#d4d4d4"> </span><span style="color:#569cd6">true</span><span style="color:#d4d4d4">;</span></div>
<div class="t" style="left:24.52px;top:369.70px;font-family:'Liberation Mono',monospace;font-size:1.8px;font-weight:bold;line-height:2px;color:#d4d4d4"><span style="color:#d4d4d4">} </span><span style="color:#569cd6">else if</span><span style="color:#d4d4d4"> ($retail_purchase_payment[</span><span style="color:#ce9178">'status'</span><span style="color:#d4d4d4">] == </span><span style="color:#ce9178">'posted'</span><span style="color:#d4d4d4">) {</span></div>
<div class="t" style="left:28.80px;top:371.70px;font-family:'Liberation Mono',monospace;font-size:1.8px;font-weight:bold;line-height:2px;color:#d4d4d4"><span style="color:#d4d4d4">$latest = PublishedJournal::published_journal_latest_date(</span><span style="color:#ce9178">'x'</span><span style="color:#d4d4d4">);</span></div>
<div class="t" style="left:28.80px;top:375.70px;font-family:'Liberation Mono',monospace;font-size:1.8px;font-weight:bold;line-height:2px;color:#d4d4d4"><span style="color:#569cd6">return</span><span style="color:#d4d4d4"> $retail_purchase_payment[</span><span style="color:#ce9178">'date'</span><span style="color:#d4d4d4">] &gt;= $latest &amp;&amp; $retail_purchase_payment</span></div>
<div class="t" style="left:33.08px;top:377.70px;font-family:'Liberation Mono',monospace;font-size:1.8px;font-weight:bold;line-height:2px;color:#d4d4d4"><span style="color:#d4d4d4">&amp;&amp; $retail_purchase_payment[</span><span style="color:#ce9178">'type'</span><span style="color:#d4d4d4">] == </span><span style="color:#ce9178">'cash'</span><span style="color:#d4d4d4"> &amp;&amp; $x</span></div>
<div class="t" style="left:37.36px;top:379.70px;font-family:'Liberation Mono',monospace;font-size:1.8px;font-weight:bold;line-height:2px;color:#d4d4d4"><span style="color:#d4d4d4">$retail_purchase_payment[</span><span style="color:#ce9178">'id'</span><span style="color:#d4d4d4">] != </span><span style="color:#ce9178">'0'</span><span style="color:#d4d4d4"> &amp;&amp; $y</span></div>
<div class="t" style="left:37.36px;top:381.70px;font-family:'Liberation Mono',monospace;font-size:1.8px;font-weight:bold;line-height:2px;color:#d4d4d4"><span style="color:#d4d4d4">$user-&gt;id == </span><span style="color:#ce9178">'1'</span><span style="color:#d4d4d4"> &amp;&amp; $z</span></div>
<div class="t" style="left:37.36px;top:383.70px;font-family:'Liberation Mono',monospace;font-size:1.8px;font-weight:bold;line-height:2px;color:#d4d4d4"><span style="color:#d4d4d4">$x == $y</span></div>
</div>
<div class="a" style="left:1352px;top:92px;width:1px;height:389px;background:#3a3a3a;"></div>
<div class="a" style="left:1353px;top:409px;width:13px;height:20px;background:rgba(121,121,121,0.4);"></div>
<div class="a" style="left:1353px;top:424px;width:13px;height:2px;background:#a0a0a0;"></div>
<div class="a" style="left:1357px;top:420px;width:5px;height:5px;background:#9b7a3c;"></div>
<div class="a" style="left:1362px;top:429px;width:4px;height:7px;background:#e0b400;"></div>
<div class="a" style="left:1357px;top:431px;width:5px;height:6px;background:#9b6a2c;"></div>
<div class="a" style="left:810px;top:92px;width:417px;height:32px;background:#252526;border-left:3px solid #3b3b3b;border-radius:0 0 4px 4px;box-shadow:0 0 8px 2px rgba(0,0,0,0.36)"></div>
<svg class="i" style="left:819px;top:103px;" width="8" height="11" viewBox="0 0 8 11"><path d="M1.5 1L6.5 5.5L1.5 10" stroke="#c5c5c5" stroke-width="1.2" fill="none"/></svg>
<div class="a" style="left:831px;top:95px;width:212px;height:25px;background:#3c3c3c;border-radius:2px"></div>
<div class="a" style="left:831px;top:95px;width:146px;height:25px;overflow:hidden">
<div class="t" style="left:0px;top:7.00px;font-size:13px;color:#cccccc;letter-spacing:-0.1px">it-retail_purchase_invoice</div>
</div>
<div class="a" style="left:977px;top:98px;width:20px;height:19px;background:rgba(36,137,219,0.51);border:1px solid #007acc;border-radius:3px"></div>
<div class="t" style="left:980.5px;top:101.84px;font-size:12px;color:#ffffff;letter-spacing:-0.2px">Aa</div>
<div class="t" style="left:1002.5px;top:100.84px;font-size:12px;color:#c5c5c5;letter-spacing:-0.2px">ab</div>
<svg class="i" style="left:1000px;top:111px;" width="19" height="4" viewBox="0 0 19 4"><path d="M0.5 0V2.5H18.5V0" stroke="#c5c5c5" stroke-width="1" fill="none"/></svg>
<div class="a" style="left:1021px;top:98px;width:20px;height:19px;background:rgba(36,137,219,0.51);border:1px solid #007acc;border-radius:3px"></div>
<div class="a" style="left:1025px;top:110px;width:4px;height:4px;background:#ffffff;"></div>
<div class="t" style="left:1028.5px;top:99.92px;font-size:19px;color:#ffffff;">*</div>
<div class="t" style="left:1049px;top:102.00px;font-size:13px;color:#cccccc;letter-spacing:-0.5px">1 of 2</div>
<svg class="i" style="left:1133px;top:100px;" width="11" height="13" viewBox="0 0 11 13"><path d="M5.5 13V1.5M1 6L5.5 1.5L10 6" stroke="#c5c5c5" stroke-width="1.2" fill="none"/></svg>
<svg class="i" style="left:1158px;top:100px;" width="11" height="13" viewBox="0 0 11 13"><path d="M5.5 0V11.5M1 7L5.5 11.5L10 7" stroke="#c5c5c5" stroke-width="1.2" fill="none"/></svg>
<svg class="i" style="left:1180px;top:103px;" width="15" height="10" viewBox="0 0 15 10"><path d="M1 1.5H12M1 5.5H15M1 9.5H10" stroke="#c5c5c5" stroke-width="1.2" fill="none"/></svg>
<svg class="i" style="left:1207px;top:103px;" width="10" height="10" viewBox="0 0 10 10"><path d="M0.5 0.5L9.5 9.5M9.5 0.5L0.5 9.5" stroke="#c5c5c5" stroke-width="1.2" fill="none"/></svg>
<div class="a" style="left:702px;top:143px;width:649px;height:249px;background:#252526;border:1px solid #454545;border-radius:3px;box-shadow:0 0 8px 2px rgba(0,0,0,0.36)"></div>
<div class="a" style="left:703px;top:171px;width:647px;height:1px;background:#454545;"></div>
<div class="t" style="left:711px;top:152.15px;font-size:13.5px;color:#d4d4d4;font-family:'Liberation Mono',monospace;letter-spacing:-0.42px"><span style="color:#569cd6">function</span><span style="color:#d4d4d4"> date(</span><span style="color:#569cd6">string</span><span style="color:#d4d4d4"> $format, </span><span style="color:#569cd6">int</span><span style="color:#d4d4d4">|</span><span style="color:#569cd6">null</span><span style="color:#d4d4d4"> $timestamp = </span><span style="color:#569cd6">null</span><span style="color:#d4d4d4">): </span><span style="color:#569cd6">string</span></div>
<div class="t" style="left:711px;top:179.15px;font-size:14px;color:#cccccc;">Format a Unix timestamp</div>
<div class="t" style="left:711px;top:206.15px;font-size:14px;color:#cccccc;letter-spacing:0.07px">Returns a string formatted according to the given format string using the given integer</div>
<div class="a" style="left:1250px;top:205px;width:81px;height:17px;background:rgba(10,10,10,0.4);border-radius:3px"></div><div class="t" style="left:1255.94px;top:208.15px;font-size:13.5px;color:#d4d4d4;font-family:'Liberation Mono',monospace;letter-spacing:-0.42px">timestamp</div>
<div class="t" style="left:711px;top:227.15px;font-size:14px;color:#cccccc;">(Unix timestamp) or the current time if no timestamp is given. In other words,</div>
<div class="a" style="left:1191px;top:226px;width:81px;height:17px;background:rgba(10,10,10,0.4);border-radius:3px"></div><div class="t" style="left:1196.94px;top:229.15px;font-size:13.5px;color:#d4d4d4;font-family:'Liberation Mono',monospace;letter-spacing:-0.42px">timestamp</div>
<div class="t" style="left:1276px;top:227.15px;font-size:14px;color:#cccccc;">is optional</div>
<div class="t" style="left:711px;top:248.15px;font-size:14px;color:#cccccc;">and defaults to the value of time().</div>
<div class="t" style="left:711px;top:275.15px;font-size:14px;color:#3794ff;letter-spacing:0.18px">https://www.php.net/manual/function.date.php</div>
<div class="t" style="left:711px;top:302.15px;font-size:14px;color:#cccccc;font-style:italic;letter-spacing:-0.3px">@param</div>
<div class="a" style="left:768px;top:301px;width:65px;height:17px;background:rgba(10,10,10,0.4);border-radius:3px"></div><div class="t" style="left:773.62px;top:304.15px;font-size:13.5px;color:#d4d4d4;font-family:'Liberation Mono',monospace;letter-spacing:-0.42px">$format</div>
<div class="t" style="left:835px;top:302.15px;font-size:14px;color:#cccccc;letter-spacing:-0.19px">: Format accepted by DateTimeInterface::format(). Note : date() will always</div>
<div class="t" style="left:711px;top:323.15px;font-size:14px;color:#cccccc;">generate</div>
<div class="a" style="left:770px;top:322px;width:57px;height:17px;background:rgba(10,10,10,0.4);border-radius:3px"></div><div class="t" style="left:775.46px;top:325.15px;font-size:13.5px;color:#d4d4d4;font-family:'Liberation Mono',monospace;letter-spacing:-0.42px">000000</div>
<div class="t" style="left:832px;top:323.15px;font-size:14px;color:#cccccc;letter-spacing:-0.19px">as microseconds since it takes an</div>
<div class="a" style="left:1038px;top:322px;width:35px;height:17px;background:rgba(10,10,10,0.4);border-radius:3px"></div><div class="t" style="left:1043.98px;top:325.15px;font-size:13.5px;color:#d4d4d4;font-family:'Liberation Mono',monospace;letter-spacing:-0.42px">int</div>
<div class="t" style="left:1077px;top:323.15px;font-size:14px;color:#cccccc;letter-spacing:-0.12px">parameter, whereas DateTime::format()</div>
<div class="t" style="left:711px;top:344.15px;font-size:14px;color:#cccccc;letter-spacing:-0.06px">does support microseconds if DateTime was created with microseconds.</div>
<div class="t" style="left:711px;top:371.15px;font-size:14px;color:#cccccc;font-style:italic;letter-spacing:-0.3px">@param</div>
<div class="a" style="left:768px;top:370px;width:88px;height:17px;background:rgba(10,10,10,0.4);border-radius:3px"></div><div class="t" style="left:773.6px;top:373.15px;font-size:13.5px;color:#d4d4d4;font-family:'Liberation Mono',monospace;letter-spacing:-0.42px">$timestamp</div>
<div class="t" style="left:856px;top:371.15px;font-size:14px;color:#cccccc;letter-spacing:-0.2px">: The optional</div>
<div class="a" style="left:945px;top:370px;width:79px;height:17px;background:rgba(10,10,10,0.4);border-radius:3px"></div><div class="t" style="left:949.94px;top:373.15px;font-size:13.5px;color:#d4d4d4;font-family:'Liberation Mono',monospace;letter-spacing:-0.42px">timestamp</div>
<div class="t" style="left:1029px;top:371.15px;font-size:14px;color:#cccccc;letter-spacing:-0.38px">parameter is an</div>
<div class="a" style="left:1128px;top:370px;width:33px;height:17px;background:rgba(10,10,10,0.4);border-radius:3px"></div><div class="t" style="left:1132.98px;top:373.15px;font-size:13.5px;color:#d4d4d4;font-family:'Liberation Mono',monospace;letter-spacing:-0.42px">int</div>
<div class="t" style="left:1167px;top:371.15px;font-size:14px;color:#cccccc;">Unix timestamp that</div>
<div class="t" style="left:403.5px;top:495.54px;font-size:10px;color:#969696;letter-spacing:-0.3px">PROBLEMS</div>
<div class="a" style="left:467px;top:492px;width:22px;height:17px;background:#4d4d4d;border-radius:9px"></div>
<div class="t" style="left:471.5px;top:495.11px;font-size:10.5px;color:#ffffff;">65</div>
<div class="t" style="left:510.5px;top:495.54px;font-size:10px;color:#969696;letter-spacing:0px">OUTPUT</div>
<div class="t" style="left:576px;top:495.54px;font-size:10px;color:#e7e7e7;letter-spacing:0px">TERMINAL</div>
<div class="a" style="left:574px;top:512px;width:55px;height:1px;background:#e7e7e7;"></div>
<div class="t" style="left:651px;top:495.54px;font-size:10px;color:#969696;letter-spacing:-0.1px">DEBUG CONSOLE</div>
<div class="t" style="left:760.5px;top:495.54px;font-size:10px;color:#969696;letter-spacing:-0.5px">PORTS</div>
<div class="t" style="left:816.5px;top:495.54px;font-size:10px;color:#969696;letter-spacing:-0.3px">GITLENS</div>
<svg class="i" style="left:1141px;top:492px;" width="15" height="15" viewBox="0 0 15 15"><rect x="0.6" y="0.6" width="13.8" height="13.8" rx="1" stroke="#c5c5c5" stroke-width="1.2" fill="none"/><path d="M3.5 4L6.5 7L3.5 10M7.5 11H11.5" stroke="#c5c5c5" stroke-width="1.2" fill="none"/></svg>
<div class="t" style="left:1159px;top:493.84px;font-size:12px;color:#cccccc;letter-spacing:-0.2px">bash</div>
<svg class="i" style="left:1192px;top:492px;" width="15" height="15" viewBox="0 0 15 15"><path d="M7.5 1V14M1 7.5H14" stroke="#c5c5c5" stroke-width="1.3" fill="none"/></svg>
<svg class="i" style="left:1211px;top:497px;" width="9" height="5" viewBox="0 0 9 5"><path d="M0.5 0.5L4.5 4.5L8.5 0.5" stroke="#c5c5c5" stroke-width="1.2" fill="none"/></svg>
<svg class="i" style="left:1232px;top:492px;" width="15" height="15" viewBox="0 0 15 15"><rect x="0.6" y="0.6" width="13.8" height="13.8" rx="1" stroke="#c5c5c5" stroke-width="1.2" fill="none"/><path d="M7.5 1V14" stroke="#c5c5c5" stroke-width="1.2" fill="none"/></svg>
<svg class="i" style="left:1257px;top:492px;" width="14" height="15" viewBox="0 0 14 15"><path d="M0.5 3H13.5M4.5 3V1H9.5V3M2 3L3 14H11L12 3M5.5 5.5V12M8.5 5.5V12" stroke="#c5c5c5" stroke-width="1.2" fill="none"/></svg>
<svg class="i" style="left:1284px;top:499px;" width="14" height="3" viewBox="0 0 14 3"><circle cx="1.5" cy="1.5" r="1.2" fill="#c5c5c5"/><circle cx="7" cy="1.5" r="1.2" fill="#c5c5c5"/><circle cx="12.5" cy="1.5" r="1.2" fill="#c5c5c5"/></svg>
<svg class="i" style="left:1311px;top:495px;" width="12" height="7" viewBox="0 0 12 7"><path d="M0.7 6.3L6 1L11.3 6.3" stroke="#c5c5c5" stroke-width="1.3" fill="none"/></svg>
<svg class="i" style="left:1338px;top:494px;" width="11" height="11" viewBox="0 0 11 11"><path d="M0.5 0.5L10.5 10.5M10.5 0.5L0.5 10.5" stroke="#c5c5c5" stroke-width="1.3" fill="none"/></svg>
<div class="t" style="left:403px;top:537.50px;font-size:12.4px;color:#cccccc;font-family:'Liberation Mono',monospace;letter-spacing:-0.44px"><span style="color:#cccccc">remote:   https://gitlab.com/edwin-consultant/edwin-acsi-be/-/merge_requests/104</span></div>
<div class="t" style="left:403px;top:554.50px;font-size:12.4px;color:#cccccc;font-family:'Liberation Mono',monospace;letter-spacing:-0.44px"><span style="color:#cccccc">remote:</span></div>
<div class="t" style="left:403px;top:571.50px;font-size:12.4px;color:#cccccc;font-family:'Liberation Mono',monospace;letter-spacing:-0.44px"><span style="color:#cccccc">To https://gitlab.com/edwin-consultant/edwin-acsi-be</span></div>
<div class="t" style="left:403px;top:588.50px;font-size:12.4px;color:#cccccc;font-family:'Liberation Mono',monospace;letter-spacing:-0.44px"><span style="color:#cccccc">   253b070..e86d705  fix-perhitungan -&gt; fix-perhitungan</span></div>
<div class="t" style="left:403px;top:622.50px;font-size:12.4px;color:#cccccc;font-family:'Liberation Mono',monospace;letter-spacing:-0.44px"><span style="color:#23d18b">PC01@DESKTOP-9E27DUF </span><span style="color:#d670d6">MINGW64 </span><span style="color:#e5e510">/d/edwin-acsi-be </span><span style="color:#29b8db">(fix-perhitungan)</span></div>
<div class="t" style="left:403px;top:639.50px;font-size:12.4px;color:#cccccc;font-family:'Liberation Mono',monospace;letter-spacing:-0.44px"><span style="color:#cccccc">$ git add .</span></div>
<div class="t" style="left:403px;top:673.50px;font-size:12.4px;color:#cccccc;font-family:'Liberation Mono',monospace;letter-spacing:-0.44px"><span style="color:#23d18b">PC01@DESKTOP-9E27DUF </span><span style="color:#d670d6">MINGW64 </span><span style="color:#e5e510">/d/edwin-acsi-be </span><span style="color:#29b8db">(fix-perhitungan)</span></div>
<div class="t" style="left:403px;top:690.50px;font-size:12.4px;color:#cccccc;font-family:'Liberation Mono',monospace;letter-spacing:-0.44px"><span style="color:#cccccc">$ git commit -m "fix hak akses</span></div>
<div class="a" style="left:613px;top:688px;width:8px;height:16px;background:#cccccc;"></div>
<div class="a" style="left:1355px;top:523px;width:11px;height:183px;background:rgba(121,121,121,0.12);"></div>
<div class="a" style="left:1355px;top:686px;width:11px;height:20px;background:rgba(121,121,121,0.4);"></div>
<div class="a" style="left:0px;top:706px;width:34px;height:22px;background:#16825d;"></div>
<svg class="i" style="left:10px;top:710px;" width="14" height="14" viewBox="0 0 14 14"><path d="M2.5 4.5L6.5 8.5L2.5 12.8M11.5 1L7.5 5L11.5 9" stroke="#ffffff" stroke-width="1.2" fill="none"/></svg>
<svg class="i" style="left:41px;top:709px;" width="12" height="16" viewBox="0 0 12 16"><circle cx="3" cy="3" r="2" stroke="#ffffff" stroke-width="1.2" fill="none"/><circle cx="3" cy="13" r="2" stroke="#ffffff" stroke-width="1.2" fill="none"/><circle cx="9.5" cy="5" r="2" stroke="#ffffff" stroke-width="1.2" fill="none"/><path d="M3 5V11M9.5 7c0 3-6.5 2-6.5 4" stroke="#ffffff" stroke-width="1.2" fill="none"/></svg>
<div class="t" style="left:57px;top:711.84px;font-size:12px;color:#ffffff;letter-spacing:0.15px">fix-perhitungan+</div>
<svg class="i" style="left:154px;top:711px;" width="14" height="12" viewBox="0 0 14 12"><path d="M4 10H3.2a2.7 2.7 0 0 1-0.3-5.4 3.8 3.8 0 0 1 7.3-0.7 2.6 2.6 0 0 1 1.2 6.1H10M7 11.5V6.5M5.2 8.2L7 6.4 8.8 8.2" stroke="#ffffff" stroke-width="1.1" fill="none"/></svg>
<svg class="i" style="left:181px;top:709px;" width="14" height="16" viewBox="0 0 14 16"><circle cx="3" cy="3" r="1.8" stroke="#ffffff" stroke-width="1.1" fill="none"/><circle cx="3" cy="13" r="1.8" stroke="#ffffff" stroke-width="1.1" fill="none"/><circle cx="10.5" cy="7.5" r="1.8" stroke="#ffffff" stroke-width="1.1" fill="none"/><path d="M3 4.8V11.2M5 1.5V14.5M10.5 9.3C10.5 12 7 11 5 13" stroke="#ffffff" stroke-width="1.1" fill="none"/></svg>
<svg class="i" style="left:212px;top:710px;" width="14" height="14" viewBox="0 0 14 14"><circle cx="7" cy="7" r="6.2" stroke="#ffffff" stroke-width="1.2" fill="none"/><path d="M4.5 4.5L9.5 9.5M9.5 4.5L4.5 9.5" stroke="#ffffff" stroke-width="1.2" fill="none"/></svg>
<div class="t" style="left:228px;top:711.84px;font-size:12px;color:#ffffff;letter-spacing:0px">19</div>
<svg class="i" style="left:245px;top:710px;" width="14" height="13" viewBox="0 0 14 13"><path d="M7 1L13.5 12.5H0.5Z M7 5V9M7 10.5V11.5" stroke="#ffffff" stroke-width="1.2" fill="none"/></svg>
<div class="t" style="left:261.5px;top:711.84px;font-size:12px;color:#ffffff;letter-spacing:0px">40</div>
<svg class="i" style="left:279px;top:710px;" width="14" height="14" viewBox="0 0 14 14"><circle cx="7" cy="7" r="6.2" stroke="#ffffff" stroke-width="1.2" fill="none"/><path d="M7 6V11M7 3.5V4.8" stroke="#ffffff" stroke-width="1.4" fill="none"/></svg>
<div class="t" style="left:295px;top:711.84px;font-size:12px;color:#ffffff;letter-spacing:0px">6</div>
<svg class="i" style="left:319px;top:710px;" width="14" height="14" viewBox="0 0 14 14"><circle cx="7" cy="5" r="1.3" fill="#ffffff"/><path d="M7 6.5L4 13.5M7 6.5L10 13.5M5 11H9M3.5 2A4.5 4.5 0 0 0 3.5 8M10.5 2A4.5 4.5 0 0 1 10.5 8M1.5 0.5A7 7 0 0 0 1.5 9.5M12.5 0.5A7 7 0 0 1 12.5 9.5" stroke="#ffffff" stroke-width="1.1" fill="none"/></svg>
<div class="t" style="left:335px;top:711.84px;font-size:12px;color:#ffffff;letter-spacing:0px">0</div>
<svg class="i" style="left:358px;top:709px;" width="16" height="16" viewBox="0 0 16 16"><path d="M2.5 0.5V4.5M0.5 2.5H4.5M3 11V15M1 13H5" stroke="#ffffff" stroke-width="1.1" fill="none"/><path d="M6 3L8.5 5.5H11.5L14.5 3L15 8L10 12.5L5.5 8.5" stroke="#ffffff" stroke-width="1.3" fill="none" stroke-linejoin="round"/><path d="M8.5 8.5L10 10L11.5 8.5" stroke="#ffffff" stroke-width="1" fill="none"/></svg>
<svg class="i" style="left:829px;top:711px;" width="8" height="13" viewBox="0 0 8 13"><circle cx="4" cy="6" r="2.5" stroke="#ffffff" stroke-width="1.3" fill="none"/><path d="M4 0V3.5M4 8.5V13" stroke="#ffffff" stroke-width="1.3" fill="none"/></svg>
<div class="t" style="left:843.5px;top:711.84px;font-size:12px;color:#ffffff;letter-spacing:-0.15px">You, 1 second ago</div>
<div class="t" style="left:955.5px;top:711.84px;font-size:12px;color:#ffffff;letter-spacing:-0.2px">Ln 1673, Col 68</div>
<div class="t" style="left:1053px;top:711.84px;font-size:12px;color:#ffffff;letter-spacing:-0.4px">Spaces: 4</div>
<div class="t" style="left:1118px;top:711.84px;font-size:12px;color:#ffffff;letter-spacing:-0.5px">UTF-8</div>
<div class="t" style="left:1164.5px;top:711.84px;font-size:12px;color:#ffffff;letter-spacing:-1px">CRLF</div>
<div class="t" style="left:1207.5px;top:711.84px;font-size:12px;color:#ffffff;letter-spacing:-0.7px">PHP</div>
<div class="t" style="left:1245.5px;top:711.84px;font-size:12px;color:#ffffff;letter-spacing:-0.4px">8.0</div>
<svg class="i" style="left:1278px;top:712px;" width="14" height="13" viewBox="0 0 14 13"><path d="M1.5 12L7 6.5M6 4.5A3.5 3.5 0 1 1 9.5 8" stroke="#ffffff" stroke-width="2.2" fill="none" stroke-linecap="round"/></svg>
<svg class="i" style="left:1305px;top:712px;" width="17" height="12" viewBox="0 0 17 12"><path d="M2 7C2 3 4 1.5 8.5 1.5S15 3 15 7 13 11 8.5 11 2 11 2 7Z" fill="#ffffff"/><rect x="5.5" y="5" width="6" height="3.5" fill="#007acc"/><path d="M8.5 5V8.5" stroke="#ffffff" stroke-width="1"/></svg>
<svg class="i" style="left:1336px;top:710px;" width="14" height="14" viewBox="0 0 14 14"><path d="M3 10V6a4 4 0 0 1 8 0V10L12.5 11.5H1.5Z M5.5 12.5a1.5 1.5 0 0 0 3 0" stroke="#ffffff" stroke-width="1.3" fill="none"/></svg>
<div class="a" style="left:986px;top:524px;width:364px;height:190px;background:linear-gradient(180deg,#cfcfcf 0%,#cccdcf 55%,#c5cad2 100%);border:1px solid #d8d8d8;border-bottom:none"></div>
<svg class="i" style="left:1002px;top:543px;" width="16" height="16" viewBox="0 0 16 16"><rect width="16" height="16" fill="#1274d6"/><circle cx="8" cy="8" r="6" fill="#ffffff"/><rect x="4" y="6" width="4" height="2" fill="#36c5f0"/><rect x="8" y="3.5" width="2" height="4" fill="#2eb67d"/><rect x="8" y="8" width="4" height="2" fill="#ecb22e"/><rect x="6" y="8" width="2" height="4.5" fill="#e01e5a"/></svg>
<div class="t" style="left:1026px;top:544.42px;font-size:12.5px;color:#1e1e1e;letter-spacing:-0.1px">Slack</div>
<svg class="i" style="left:1316px;top:545px;" width="11" height="11" viewBox="0 0 11 11"><path d="M0.5 0.5L10.5 10.5M10.5 0.5L0.5 10.5" stroke="#3a3a3a" stroke-width="1.1" fill="none"/></svg>
<div class="t" style="left:1002px;top:576.88px;font-size:15.5px;color:#111111;-webkit-text-stroke:0.45px #111;letter-spacing:-0.2px">BMA - Sales</div>
<svg class="i" style="left:1002px;top:618px;" width="60" height="60" viewBox="0 0 60 60"><defs><linearGradient id="tg" x1="0" y1="0" x2="0" y2="1"><stop offset="0" stop-color="#1c82f2"/><stop offset="1" stop-color="#0a56cf"/></linearGradient><clipPath id="tc"><circle cx="30" cy="30" r="29.6"/></clipPath></defs><circle cx="30" cy="30" r="30" fill="#f6f7f8"/><rect x="2.5" y="2.5" width="55" height="55" rx="13" fill="url(#tg)" clip-path="url(#tc)"/><rect x="13" y="13.5" width="12.5" height="30.5" rx="2" fill="#ffffff"/><rect x="33.5" y="13.5" width="12.5" height="18.5" rx="2" fill="#ffffff"/></svg>
<div class="t" style="left:1078px;top:617.30px;font-size:15px;color:#111111;-webkit-text-stroke:0.5px #111;letter-spacing:0.1px">#trello-project</div>
<div class="t" style="left:1078px;top:637.30px;font-size:15px;color:#5a5a5a;letter-spacing:-0.2px">Trello: Fian Edwin moved the card</div>
<div class="t" style="left:1078px;top:657.30px;font-size:15px;color:#5a5a5a;letter-spacing:-0.3px">ACSI - FE - Menu Retur Pembelian</div>
<div class="t" style="left:1078px;top:677.30px;font-size:15px;color:#5a5a5a;letter-spacing:-0.3px">from Developed FE to WIP FE.</div>
<div class="a" style="left:245px;top:728px;width:47px;height:40px;background:rgba(255,255,255,0.55);"></div>
<div class="a" style="left:292px;top:728px;width:1px;height:40px;background:rgba(160,170,180,0.5);"></div>
<div class="a" style="left:200px;top:766px;width:40px;height:2px;background:#0a64c8;"></div>
<div class="a" style="left:245px;top:766px;width:47px;height:2px;background:#0a64c8;"></div>
<div class="a" style="left:298px;top:766px;width:40px;height:2px;background:#0a64c8;"></div>
<div class="a" style="left:347px;top:766px;width:40px;height:2px;background:#0a64c8;"></div>
<div class="a" style="left:396px;top:766px;width:40px;height:2px;background:#0a64c8;"></div>
<div class="a" style="left:445px;top:766px;width:40px;height:2px;background:#0a64c8;"></div>
<div class="a" style="left:494px;top:766px;width:40px;height:2px;background:#0a64c8;"></div>
<div class="a" style="left:543px;top:766px;width:40px;height:2px;background:#0a64c8;"></div>
<div class="a" style="left:379px;top:766px;width:8px;height:2px;background:#7fb0e0;"></div>
<svg class="i" style="left:15px;top:740px;" width="18" height="16" viewBox="0 0 18 16"><path d="M0 2.2L7.3 1.2V7.5H0Z M8.3 1L18 -0.2V7.5H8.3Z M0 8.5H7.3V14.8L0 13.8Z M8.3 8.5H18V16.2L8.3 15Z" fill="#000000"/></svg>
<svg class="i" style="left:63px;top:737px;" width="21" height="22" viewBox="0 0 21 22"><circle cx="12.5" cy="8.5" r="7" stroke="#000" stroke-width="2" fill="none"/><path d="M7.5 13.5L1 20" stroke="#000" stroke-width="2.2"/></svg>
<svg class="i" style="left:111px;top:740px;" width="18" height="17" viewBox="0 0 18 17"><rect x="2.5" y="3.5" width="10" height="9" stroke="#000" stroke-width="1.4" fill="none"/><path d="M0 1.2H13M0 15.2H13M16 0.5V3M16 5V16" stroke="#000" stroke-width="1.4"/><rect x="14.8" y="3.3" width="2.6" height="2.6" fill="#000"/></svg>
<svg class="i" style="left:160px;top:738px;" width="22" height="19" viewBox="0 0 22 19"><path d="M0 2a1 1 0 0 1 1-1H8l2 2H21a1 1 0 0 1 1 1V17a1 1 0 0 1-1 1H1a1 1 0 0 1-1-1Z" fill="#e8b43a"/><path d="M0 5H22V17a1 1 0 0 1-1 1H1a1 1 0 0 1-1-1Z" fill="#fcd462"/><path d="M4.5 19V11H17.5V19H14V14.5H8V19Z" fill="#1f88e5"/></svg>
<svg class="i" style="left:208px;top:736px;" width="24" height="24" viewBox="0 0 24 24"><circle cx="12" cy="12" r="12" fill="#1ed760"/><path d="M5 8.5C9 7 15 7.3 19 9.5M6 12.2C9.5 11 14 11.3 17.5 13.2M7 15.6C10 14.8 13.2 15 15.8 16.4" stroke="#000" stroke-width="2" stroke-linecap="round" fill="none"/></svg>
<svg class="i" style="left:257px;top:736px;" width="24" height="24" viewBox="0 0 100 100"><path d="M96.46 10.8L75.86 0.87C73.48-0.28 70.63 0.2 68.76 2.07L1.3 63.57C-0.51 65.22-0.51 68.08 1.31 69.73L6.82 74.74C8.3 76.09 10.53 76.19 12.13 74.98L93.4 13.33C96.12 11.26 100 13.2 100 16.62V16.38C100 13.98 98.63 11.8 96.46 10.8Z" fill="#1a7fc8"/><path d="M96.46 89.2L75.86 99.13C73.48 100.28 70.63 99.8 68.76 97.93L1.3 36.43C-0.51 34.78-0.51 31.92 1.31 30.27L6.82 25.26C8.3 23.91 10.53 23.81 12.13 25.02L93.4 86.67C96.12 88.74 100 86.8 100 83.38V83.62C100 86.02 98.63 88.2 96.46 89.2Z" fill="#2196e0"/><path d="M75.86 99.13C73.48 100.27 70.63 99.79 68.76 97.92C71.07 100.23 75 98.6 75 95.34V4.66C75 1.4 71.07-0.23 68.76 2.08C70.63 0.21 73.48-0.27 75.86 0.87L96.46 10.79C98.63 11.83 100 14.01 100 16.42V83.58C100 85.99 98.63 88.17 96.46 89.21Z" fill="#3caaf2"/></svg>
<svg class="i" style="left:306px;top:736px;" width="24" height="24" viewBox="0 0 24 24"><circle cx="12" cy="12" r="12" fill="#db4437"/><path d="M12 12L1.6 6A12 12 0 0 0 6 22.4Z" fill="#0f9d58"/><path d="M12 12L6 22.4A12 12 0 0 0 22.4 6Z" fill="#0f9d58"/><path d="M12 12L22.4 6A12 12 0 0 1 12 24L6 22.4Z" fill="#ffcd40"/><path d="M12 12L1.6 6A12 12 0 0 1 22.4 6Z" fill="#db4437"/><circle cx="12" cy="12" r="5.4" fill="#ffffff"/><circle cx="12" cy="12" r="4.3" fill="#4285f4"/><circle cx="18" cy="18" r="8" fill="#1a8ad8"/><text x="18" y="22" font-size="10" font-family="Liberation Sans" fill="#fff" text-anchor="middle">P</text></svg>
<svg class="i" style="left:355px;top:739px;" width="23" height="19" viewBox="0 0 23 19"><path d="M3 3L20 1L22 16L5 18Z" fill="#cfe6f2" stroke="#7a9aa8" stroke-width="0.8"/><path d="M1 5L18 3L20 17L3 19Z" fill="#a9d3ea" stroke="#6d93a6" stroke-width="0.8"/><path d="M4 8H17M4 11H17M4 14H17" stroke="#86b4cc" stroke-width="0.7"/></svg>
<svg class="i" style="left:405px;top:736px;" width="24" height="24" viewBox="0 0 24 24"><circle cx="12" cy="12" r="12" fill="#db4437"/><path d="M12 12L1.6 6A12 12 0 0 0 6 22.4Z" fill="#0f9d58"/><path d="M12 12L6 22.4A12 12 0 0 0 22.4 6Z" fill="#0f9d58"/><path d="M12 12L22.4 6A12 12 0 0 1 12 24L6 22.4Z" fill="#ffcd40"/><path d="M12 12L1.6 6A12 12 0 0 1 22.4 6Z" fill="#db4437"/><circle cx="12" cy="12" r="5.4" fill="#ffffff"/><circle cx="12" cy="12" r="4.3" fill="#4285f4"/><circle cx="18" cy="18" r="8" fill="#1e1e1e"/><circle cx="18" cy="14.5" r="1.8" fill="#3a3a3a"/><path d="M15.5 25V17.5Q18 16 20.5 17.5V25Z" fill="#333"/></svg>
<svg class="i" style="left:453px;top:736px;" width="24" height="24" viewBox="0 0 24 24"><circle cx="12" cy="12" r="12" fill="#f4f4f4" stroke="#dcdcdc" stroke-width="0.6"/><rect x="4.5" y="9" width="6.5" height="2.8" rx="1.4" fill="#36c5f0"/><rect x="10" y="4" width="2.8" height="6.5" rx="1.4" fill="#2eb67d"/><rect x="13.5" y="8" width="2.8" height="4" rx="1.4" fill="#2eb67d"/><rect x="5.5" y="13" width="2.8" height="2.8" rx="1.4" fill="#e01e5a"/><rect x="8.5" y="13" width="2.8" height="6" rx="1.4" fill="#e01e5a"/><circle cx="18.5" cy="17.5" r="7.2" fill="#c8173a" stroke="#fff" stroke-width="1"/><text x="18.5" y="21.3" font-size="10" font-family="Liberation Sans" fill="#fff" text-anchor="middle">84</text></svg>
<svg class="i" style="left:502px;top:736px;" width="24" height="24" viewBox="0 0 24 24"><circle cx="12" cy="12" r="12" fill="#f46d2f"/><path d="M5 19L15 9M14 6L18 10L16 11L13 8Z" stroke="#ffffff" stroke-width="1.8" fill="none" stroke-linecap="round"/><circle cx="17" cy="7" r="2" fill="#fff"/></svg>
<svg class="i" style="left:551px;top:738px;" width="23" height="19" viewBox="0 0 23 19"><rect x="0.5" y="0.5" width="22" height="18" fill="#f7f7f7" stroke="#5f6b73" stroke-width="1"/><rect x="2.5" y="3" width="11" height="13" fill="#3e8c7a"/><path d="M2.5 10L13.5 4V16H2.5Z" fill="#88c4a8"/><path d="M15.5 4H20M15.5 7H20M15.5 10H20M15.5 13H20" stroke="#6a7780" stroke-width="1"/><rect x="19" y="3" width="1.5" height="5" fill="#2a7ed2"/></svg>
<svg class="i" style="left:924px;top:740px;" width="25" height="16" viewBox="0 0 25 16"><path d="M1.5 2.5L8 8.5L12 4.5L19 11.5" stroke="#d8442a" stroke-width="3.4" fill="none" stroke-linejoin="miter"/><path d="M13.5 14.5H22.5V5.5Z" fill="#d8442a"/><path d="M4 5.5L8 9.5" stroke="#a8321c" stroke-width="1"/></svg>
<div class="t" style="left:956px;top:741.15px;font-size:14px;color:#1a1a1a;letter-spacing:-0.1px">Daftar pantauan</div>
<div class="t" style="left:1065.5px;top:741.15px;font-size:14px;color:#c42b1c;letter-spacing:-0.3px">-4,2...</div>
<svg class="i" style="left:1122px;top:744px;" width="14" height="8" viewBox="0 0 14 8"><path d="M1 7L7 1L13 7" stroke="#1a1a1a" stroke-width="1.3" fill="none"/></svg>
<svg class="i" style="left:1145px;top:740px;" width="15" height="17" viewBox="0 0 15 17"><rect x="1" y="4" width="9" height="9" rx="1.5" stroke="#1a1a1a" stroke-width="1.2" fill="none"/><path d="M10 7L14 5V12L10 10M3 1H8M3 16H8" stroke="#1a1a1a" stroke-width="1.2" fill="none"/></svg>
<svg class="i" style="left:1172px;top:741px;" width="18" height="16" viewBox="0 0 18 16"><path d="M2.5 14.5A12 12 0 0 1 14.5 2.5M6 14.5A8.5 8.5 0 0 1 14.5 6M9.5 14.5A5 5 0 0 1 14.5 9.5" stroke="#1a1a1a" stroke-width="1.3" fill="none"/><circle cx="14" cy="14" r="1.3" fill="#1a1a1a"/></svg>
<svg class="i" style="left:1192px;top:741px;" width="17" height="15" viewBox="0 0 17 15"><path d="M1 5H4L9 1V14L4 10H1Z" stroke="#1a1a1a" stroke-width="1.2" fill="none"/><path d="M11 5L15 9.5M15 5L11 9.5" stroke="#1a1a1a" stroke-width="1.2"/></svg>
<div class="t" style="left:1219px;top:741.84px;font-size:12px;color:#1a1a1a;letter-spacing:-0.2px">ENG</div>
<div class="t" style="left:1256px;top:733.42px;font-size:12.5px;color:#1a1a1a;letter-spacing:0.1px">11:50 AM</div>
<div class="t" style="left:1251px;top:751.34px;font-size:12px;color:#1a1a1a;letter-spacing:-0.1px">12/12/2023</div>
<svg class="i" style="left:1324px;top:739px;" width="26" height="26" viewBox="0 0 26 26"><path d="M1 1H16V13H6L2.5 16.5V13H1Z" fill="#1a1a1a"/><path d="M4 4.5H13M4 7H13M4 9.5H10" stroke="#dde5ec" stroke-width="1"/><circle cx="16" cy="16" r="7.8" fill="#c9ced3" stroke="#4a4a4a" stroke-width="1"/><text x="16" y="20.3" font-size="11.5" font-family="Liberation Sans" fill="#1a1a1a" text-anchor="middle">21</text></svg>
<div class="a" style="left:1361px;top:728px;width:1px;height:40px;background:#b9c3ca;"></div>
</body></html>
